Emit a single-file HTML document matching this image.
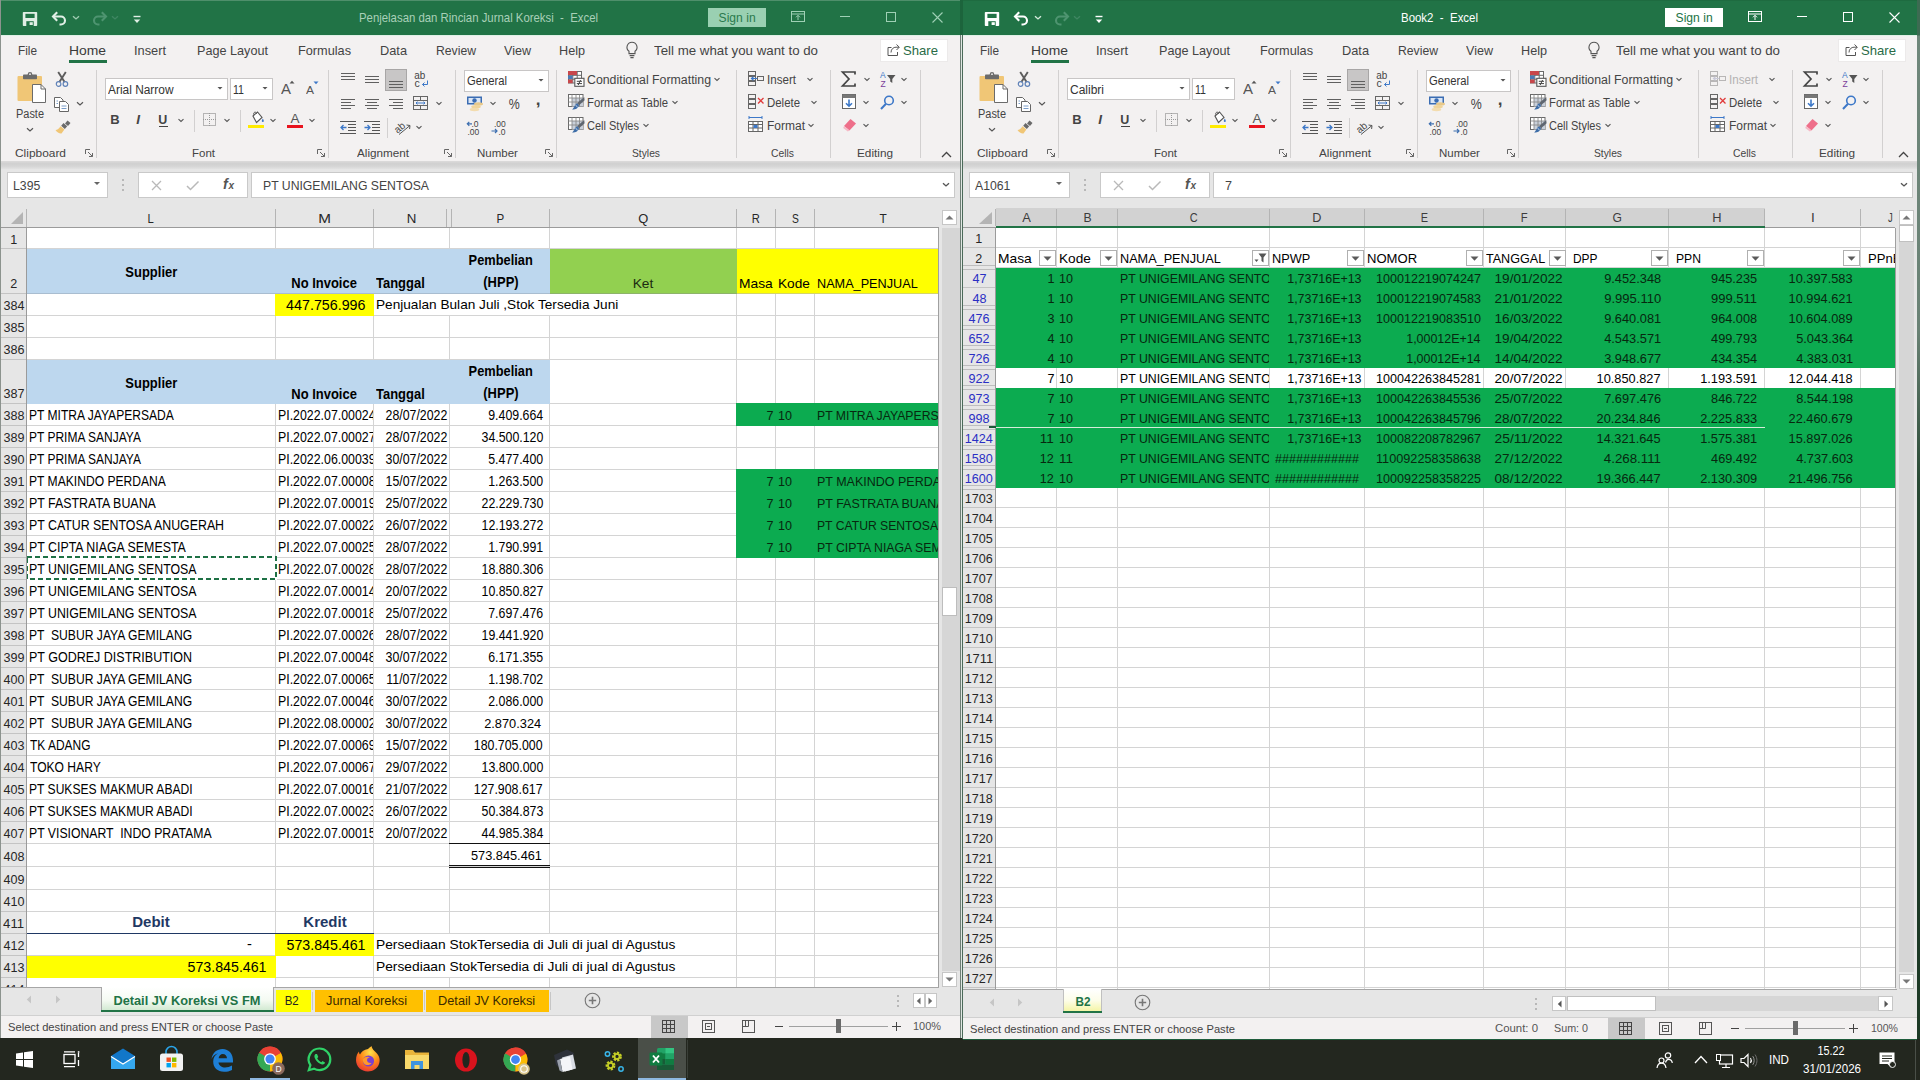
<!DOCTYPE html>
<html><head><meta charset="utf-8"><title>Excel</title>
<style>
html,body{margin:0;padding:0;}
body{width:1920px;height:1080px;overflow:hidden;position:relative;background:#23271f;font-family:"Liberation Sans",sans-serif;}
#r div,#r svg,#r span{position:absolute;}
#r{position:absolute;left:0;top:0;width:1920px;height:1080px;overflow:hidden;}
.t{white-space:pre;display:block;}
svg{overflow:visible;}
</style></head><body><div id="r">
<div style="left:0px;top:0px;width:1920px;height:1080px;background:#23271f;"></div>
<div style="left:0px;top:0px;width:961px;height:1038px;background:#e6e6e6;"></div>
<div style="left:0px;top:0px;width:961px;height:35px;background:#217346;"></div>
<div style="left:0px;top:0px;width:961px;height:1px;background:#4f8f6b;"></div>
<svg style="left:22px;top:11px;" width="16" height="16" viewBox="0 0 16 16"><rect x="0.8" y="1" width="14.4" height="14" rx="0.8" fill="#e1efe6"/><rect x="3.4" y="2.8" width="9.2" height="4.2" fill="#217346"/><rect x="4.3" y="10.2" width="7.4" height="4.8" fill="#217346"/><rect x="7.6" y="11.2" width="3.2" height="2.8" fill="#e1efe6"/></svg>
<svg style="left:51px;top:11px;" width="18" height="16" viewBox="0 0 18 16"><path d="M2 5.5 H10 A4 4 0 0 1 10 13.5 H8.5" fill="none" stroke="#e1efe6" stroke-width="2.1"/><path d="M6.2 1.3 L2 5.5 L6.2 9.7" fill="none" stroke="#e1efe6" stroke-width="2.1"/></svg>
<svg style="left:71px;top:14px;" width="10" height="8" viewBox="0 0 10 8"><path d="M2.0 2.2 L5 4.9 L8.0 2.2" fill="none" stroke="#9fcbb1" stroke-width="1.4"/></svg>
<svg style="left:90px;top:11px;" width="18" height="16" viewBox="0 0 18 16"><path d="M16 5.5 H8 A4 4 0 0 0 8 13.5 H9.5" fill="none" stroke="#4e9470" stroke-width="2.1"/><path d="M11.8 1.3 L16 5.5 L11.8 9.7" fill="none" stroke="#4e9470" stroke-width="2.1"/></svg>
<svg style="left:110px;top:14px;" width="10" height="8" viewBox="0 0 10 8"><path d="M2.0 2.2 L5 4.9 L8.0 2.2" fill="none" stroke="#3f8662" stroke-width="1.4"/></svg>
<svg style="left:132px;top:15px;" width="10" height="10" viewBox="0 0 10 10"><path d="M1.5 1.5 H8.5" stroke="#e1efe6" stroke-width="1.4"/><path d="M1.8 4.5 H8.2 L5 8 Z" fill="#e1efe6"/></svg>
<span class="t" style="left:359.00px;top:9px;height:18px;line-height:18px;font-size:13px;color:#a9d0b8;transform:scaleX(0.8750);transform-origin:0 50%;">Penjelasan dan Rincian Jurnal Koreksi &nbsp;- &nbsp;Excel</span>
<div style="left:708px;top:8px;width:58px;height:19px;background:#9ad0b2;"></div>
<span class="t" style="left:717.89px;top:9px;height:19px;line-height:19px;font-size:12.5px;color:#2a7a4e;transform:scaleX(0.9680);transform-origin:50% 50%;">Sign in</span>
<svg style="left:791px;top:11px;" width="14" height="12" viewBox="0 0 14 12"><rect x="0.5" y="0.5" width="13" height="10" fill="none" stroke="#9fd0b5" stroke-width="1"/><path d="M0.5 3 H13.5" stroke="#9fd0b5" stroke-width="1"/><path d="M7 9 V4.5 M5 6.3 L7 4.3 L9 6.3" fill="none" stroke="#9fd0b5" stroke-width="1"/></svg>
<div style="left:840px;top:16px;width:10px;height:1px;background:#9fd0b5;"></div>
<div style="left:886px;top:12px;width:10px;height:10px;border:1px solid #9fd0b5;box-sizing:border-box;"></div>
<svg style="left:932px;top:12px;" width="11" height="11" viewBox="0 0 11 11"><path d="M0.5 0.5 L10.5 10.5 M10.5 0.5 L0.5 10.5" stroke="#9fd0b5" stroke-width="1.1"/></svg>
<div style="left:0px;top:35px;width:961px;height:31px;background:#f3f1f1;"></div>
<div style="left:0px;top:35px;width:961px;height:1px;background:#dff0e6;"></div>
<span class="t" style="left:18.00px;top:42px;height:18px;line-height:18px;font-size:13px;color:#444444;transform:scaleX(0.9070);transform-origin:0 50%;">File</span>
<span class="t" style="left:69.00px;top:42px;height:18px;line-height:18px;font-size:13px;color:#3a3a3a;transform:scaleX(1.0669);transform-origin:0 50%;">Home</span>
<div style="left:69px;top:60px;width:38px;height:3px;background:#217346;"></div>
<span class="t" style="left:134.00px;top:42px;height:18px;line-height:18px;font-size:13px;color:#444444;transform:scaleX(0.9842);transform-origin:0 50%;">Insert</span>
<span class="t" style="left:197.00px;top:42px;height:18px;line-height:18px;font-size:13px;color:#444444;transform:scaleX(0.9725);transform-origin:0 50%;">Page Layout</span>
<span class="t" style="left:298.00px;top:42px;height:18px;line-height:18px;font-size:13px;color:#444444;transform:scaleX(0.9782);transform-origin:0 50%;">Formulas</span>
<span class="t" style="left:380.00px;top:42px;height:18px;line-height:18px;font-size:13px;color:#444444;transform:scaleX(0.9832);transform-origin:0 50%;">Data</span>
<span class="t" style="left:436.00px;top:42px;height:18px;line-height:18px;font-size:13px;color:#444444;transform:scaleX(0.9384);transform-origin:0 50%;">Review</span>
<span class="t" style="left:504.00px;top:42px;height:18px;line-height:18px;font-size:13px;color:#444444;transform:scaleX(0.9662);transform-origin:0 50%;">View</span>
<span class="t" style="left:559.00px;top:42px;height:18px;line-height:18px;font-size:13px;color:#444444;transform:scaleX(0.9724);transform-origin:0 50%;">Help</span>
<svg style="left:625px;top:41px;" width="14" height="19" viewBox="0 0 14 19"><path d="M7 1.2 A5 5 0 0 1 10 10.2 V12.6 H4 V10.2 A5 5 0 0 1 7 1.2 Z" fill="none" stroke="#555" stroke-width="1.1"/><path d="M4.6 14.6 H9.4 M5.4 16.6 H8.6" stroke="#555" stroke-width="1.1"/></svg>
<span class="t" style="left:654.00px;top:42px;height:18px;line-height:18px;font-size:13px;color:#444444;transform:scaleX(1.0223);transform-origin:0 50%;">Tell me what you want to do</span>
<div style="left:880px;top:39px;width:68px;height:23px;background:#ffffff;border:1px solid #eceaea;box-sizing:border-box;"></div>
<svg style="left:887px;top:43px;" width="14" height="14" viewBox="0 0 14 14"><path d="M4.5 4.5 H1 V12.5 H10.5 V9" fill="none" stroke="#555" stroke-width="1"/><path d="M4 9.5 C4 6 6.5 4.2 9 4.2 H12 M9.5 1.5 L12.3 4.2 L9.5 7" fill="none" stroke="#555" stroke-width="1"/></svg>
<span class="t" style="left:903.00px;top:42px;height:18px;line-height:18px;font-size:13px;color:#2a6b47;transform:scaleX(1.0089);transform-origin:0 50%;">Share</span>
<div style="left:0px;top:66px;width:961px;height:95px;background:#f3f1f1;"></div>
<div style="left:0px;top:161px;width:961px;height:9px;background:linear-gradient(#dcdbdb,#d0d0d0 30%,#d6d6d6 60%,#e6e6e6);"></div>
<svg style="left:16px;top:72px;" width="32" height="33" viewBox="0 0 32 33"><rect x="1.5" y="4" width="24.5" height="25" rx="1" fill="#f0c676"/><rect x="7" y="2.4" width="14" height="4.8" rx="0.8" fill="#6b6b6b"/><circle cx="14" cy="2.4" r="2.3" fill="#6b6b6b"/><circle cx="14" cy="2.2" r="0.9" fill="#f3f1f1"/><path d="M16.5 12.5 H25 L29.5 17 V30.5 H16.5 Z" fill="#ffffff" stroke="#6b6b6b" stroke-width="1"/><path d="M25 12.5 V17 H29.5" fill="none" stroke="#6b6b6b" stroke-width="1"/></svg>
<span class="t" style="left:16.00px;top:106px;height:16px;line-height:16px;font-size:12px;color:#444444;transform:scaleX(0.9125);transform-origin:0 50%;">Paste</span>
<svg style="left:25px;top:126px;" width="10" height="8" viewBox="0 0 10 8"><path d="M2.0 2.2 L5 4.9 L8.0 2.2" fill="none" stroke="#555" stroke-width="1.2"/></svg>
<svg style="left:54px;top:71px;" width="16" height="17" viewBox="0 0 16 17"><path d="M4.2 1 L10.6 11 M11.8 1 L5.4 11" stroke="#5d5d5d" stroke-width="1.9" fill="none"/><circle cx="4.6" cy="13" r="2.3" fill="none" stroke="#5f82b8" stroke-width="1.2"/><circle cx="11.4" cy="13" r="2.3" fill="none" stroke="#5f82b8" stroke-width="1.2"/></svg>
<svg style="left:54px;top:96px;" width="16" height="16" viewBox="0 0 16 16"><path d="M0.5 1.5 H6.5 L9 4 V11.5 H0.5 Z" fill="#fff" stroke="#666" stroke-width="1"/><path d="M5.5 5.5 H11.5 L14.5 8.5 V15.5 H5.5 Z" fill="#fff" stroke="#666" stroke-width="1"/><path d="M7.5 10 H12.5 M7.5 12.5 H12.5" stroke="#7a9cc8" stroke-width="1"/><path d="M2.5 5 H4 M2.5 7.5 H4" stroke="#7a9cc8" stroke-width="1"/></svg>
<svg style="left:75px;top:100px;" width="10" height="8" viewBox="0 0 10 8"><path d="M2.0 2.2 L5 4.9 L8.0 2.2" fill="none" stroke="#555" stroke-width="1.2"/></svg>
<svg style="left:54px;top:119px;" width="18" height="17" viewBox="0 0 18 17"><path d="M13.5 1.5 L16.5 4 L14 7 L11 4.5 Z" fill="#6a6a6a"/><path d="M9.5 4 L13.2 7.2 L10.8 10 L7.2 6.8 Z" fill="#6a6a6a"/><path d="M6.6 7.2 L10.4 10.6 L7.5 14.5 C5.5 14.8 3 13.5 1.5 11 C3.5 10.8 5 9.5 6.6 7.2 Z" fill="#f0c676"/></svg>
<span class="t" style="left:15.00px;top:146px;height:15px;line-height:15px;font-size:11.5px;color:#444444;transform:scaleX(1.0361);transform-origin:0 50%;">Clipboard</span>
<svg style="left:85px;top:149px;" width="9" height="9" viewBox="0 0 9 9"><path d="M0.5 5 V0.5 H5" fill="none" stroke="#666" stroke-width="1"/><path d="M3 3 L7.5 7.5 M7.5 4 V7.5 H4" fill="none" stroke="#666" stroke-width="1"/></svg>
<div style="left:96px;top:70px;width:1px;height:88px;background:#d2d0d0;"></div>
<div style="left:105px;top:78px;width:123px;height:22px;background:#fff;border:1px solid #c8c6c6;box-sizing:border-box;"></div>
<span class="t" style="left:108.00px;top:81px;height:18px;line-height:18px;font-size:12px;color:#333;transform:scaleX(0.9922);transform-origin:0 50%;">Arial Narrow</span>
<svg style="left:215px;top:86px;" width="10" height="6" viewBox="0 0 10 6"><path d="M2.5 1 L7.5 1 L5 3.5 Z" fill="#555"/></svg>
<div style="left:230px;top:78px;width:43px;height:22px;background:#fff;border:1px solid #c8c6c6;box-sizing:border-box;"></div>
<span class="t" style="left:233.00px;top:81px;height:18px;line-height:18px;font-size:12px;color:#333;transform:scaleX(0.8830);transform-origin:0 50%;">11</span>
<svg style="left:260px;top:86px;" width="10" height="6" viewBox="0 0 10 6"><path d="M2.5 1 L7.5 1 L5 3.5 Z" fill="#555"/></svg>
<span class="t" style="left:281.00px;top:80px;height:18px;line-height:18px;font-size:14px;color:#555;transform:scaleX(1.0708);transform-origin:0 50%;">A</span>
<svg style="left:289px;top:80px;" width="6" height="4" viewBox="0 0 6 4"><path d="M0.5 3.5 L3 0.8 L5.5 3.5 Z" fill="#555"/></svg>
<span class="t" style="left:306.00px;top:82px;height:16px;line-height:16px;font-size:11.5px;color:#555;transform:scaleX(1.0429);transform-origin:0 50%;">A</span>
<svg style="left:313px;top:81px;" width="6" height="4" viewBox="0 0 6 4"><path d="M0.5 0.5 L3 3.2 L5.5 0.5 Z" fill="#3d78c8"/></svg>
<span class="t" style="left:110.31px;top:111px;height:18px;line-height:18px;font-size:13px;color:#444;font-weight:700;">B</span>
<span class="t" style="left:136.37px;top:111px;height:18px;line-height:18px;font-size:13.5px;color:#444;font-weight:700;font-style:italic;font-family:"Liberation Serif",serif;">I</span>
<span class="t" style="left:158.31px;top:111px;height:18px;line-height:18px;font-size:13px;color:#444;font-weight:700;transform:scaleX(0.9586);transform-origin:50% 50%;">U</span>
<div style="left:159px;top:126px;width:9px;height:1px;background:#444;"></div>
<svg style="left:176px;top:117px;" width="10" height="8" viewBox="0 0 10 8"><path d="M2.5 2.2 L5 4.5 L7.5 2.2" fill="none" stroke="#555" stroke-width="1.1"/></svg>
<div style="left:194px;top:110px;width:1px;height:22px;background:#d2d0d0;"></div>
<svg style="left:203px;top:113px;" width="14" height="14" viewBox="0 0 14 14"><rect x="0.5" y="0.5" width="12" height="12" fill="none" stroke="#777" stroke-width="1" stroke-dasharray="1 1"/><path d="M6.5 0 V13 M0 6.5 H13" stroke="#999" stroke-width="1" stroke-dasharray="1 1"/></svg>
<svg style="left:222px;top:117px;" width="10" height="8" viewBox="0 0 10 8"><path d="M2.5 2.2 L5 4.5 L7.5 2.2" fill="none" stroke="#555" stroke-width="1.1"/></svg>
<div style="left:240px;top:110px;width:1px;height:22px;background:#d2d0d0;"></div>
<svg style="left:248px;top:111px;" width="17" height="13" viewBox="0 0 17 13"><path d="M5 5 L9.5 1 L14 6.5 L8.5 11.5 Z" fill="#fff" stroke="#555" stroke-width="1.1"/><path d="M5.5 3.5 C5.5 0.5 8.5 0.5 8.5 3" fill="none" stroke="#555" stroke-width="1"/><path d="M14.8 7.5 C16.2 9.5 16.2 11 14.8 11 C13.4 11 13.4 9.5 14.8 7.5 Z" fill="#3d78c8"/></svg>
<div style="left:248px;top:125px;width:16px;height:3px;background:#ffeb00;"></div>
<svg style="left:268px;top:117px;" width="10" height="8" viewBox="0 0 10 8"><path d="M2.5 2.2 L5 4.5 L7.5 2.2" fill="none" stroke="#555" stroke-width="1.1"/></svg>
<span class="t" style="left:290.50px;top:110px;height:18px;line-height:18px;font-size:13.5px;color:#555;">A</span>
<div style="left:287px;top:125px;width:16px;height:3px;background:#e8141f;"></div>
<svg style="left:307px;top:117px;" width="10" height="8" viewBox="0 0 10 8"><path d="M2.5 2.2 L5 4.5 L7.5 2.2" fill="none" stroke="#555" stroke-width="1.1"/></svg>
<span class="t" style="left:192.00px;top:146px;height:15px;line-height:15px;font-size:11.5px;color:#444444;">Font</span>
<svg style="left:317px;top:149px;" width="9" height="9" viewBox="0 0 9 9"><path d="M0.5 5 V0.5 H5" fill="none" stroke="#666" stroke-width="1"/><path d="M3 3 L7.5 7.5 M7.5 4 V7.5 H4" fill="none" stroke="#666" stroke-width="1"/></svg>
<div style="left:328px;top:70px;width:1px;height:88px;background:#d2d0d0;"></div>
<svg style="left:341px;top:73px;" width="14" height="9" viewBox="0 0 14 9"><rect x="0" y="0" width="14" height="1" fill="#606060"/><rect x="0" y="3" width="14" height="1" fill="#606060"/><rect x="0" y="6" width="14" height="1" fill="#606060"/></svg>
<svg style="left:365px;top:76px;" width="14" height="9" viewBox="0 0 14 9"><rect x="0" y="0" width="14" height="1" fill="#606060"/><rect x="0" y="3" width="14" height="1" fill="#606060"/><rect x="0" y="6" width="14" height="1" fill="#606060"/></svg>
<div style="left:385px;top:69px;width:22px;height:22px;background:#c8c6c6;border:1px solid #a8a6a6;box-sizing:border-box;"></div>
<svg style="left:389px;top:81px;" width="14" height="9" viewBox="0 0 14 9"><rect x="0" y="0" width="14" height="1" fill="#606060"/><rect x="0" y="3" width="14" height="1" fill="#606060"/><rect x="0" y="6" width="14" height="1" fill="#606060"/></svg>
<span class="t" style="left:414.16px;top:69px;height:12px;line-height:12px;font-size:10.5px;color:#444;transform:scaleX(0.9418);transform-origin:50% 50%;">ab</span>
<span class="t" style="left:414.38px;top:77px;height:12px;line-height:12px;font-size:10.5px;color:#444;">c</span>
<svg style="left:421px;top:80px;" width="8" height="8" viewBox="0 0 8 8"><path d="M6.5 0.5 V4.5 H1.5 M3.5 2.5 L1.5 4.5 L3.5 6.5" fill="none" stroke="#3d78c8" stroke-width="1"/></svg>
<svg style="left:341px;top:99px;" width="14" height="12" viewBox="0 0 14 12"><rect x="0" y="0" width="14" height="1" fill="#606060"/><rect x="0" y="3" width="10" height="1" fill="#606060"/><rect x="0" y="6" width="14" height="1" fill="#606060"/><rect x="0" y="9" width="10" height="1" fill="#606060"/></svg>
<svg style="left:365px;top:99px;" width="14" height="12" viewBox="0 0 14 12"><rect x="0.0" y="0" width="14" height="1" fill="#606060"/><rect x="2.0" y="3" width="10" height="1" fill="#606060"/><rect x="0.0" y="6" width="14" height="1" fill="#606060"/><rect x="2.0" y="9" width="10" height="1" fill="#606060"/></svg>
<svg style="left:389px;top:99px;" width="14" height="12" viewBox="0 0 14 12"><rect x="0" y="0" width="14" height="1" fill="#606060"/><rect x="4" y="3" width="10" height="1" fill="#606060"/><rect x="0" y="6" width="14" height="1" fill="#606060"/><rect x="4" y="9" width="10" height="1" fill="#606060"/></svg>
<svg style="left:413px;top:96px;" width="16" height="15" viewBox="0 0 16 15"><rect x="0.5" y="0.5" width="14" height="13" fill="none" stroke="#666" stroke-width="1"/><path d="M0.5 4.5 H14.5 M0.5 9.5 H14.5 M7.5 0.5 V4.5 M7.5 9.5 V13.5" stroke="#666" stroke-width="1"/><path d="M3 7 H12 M4.5 5.7 L3 7 L4.5 8.3 M10.5 5.7 L12 7 L10.5 8.3" fill="none" stroke="#3d78c8" stroke-width="1"/></svg>
<svg style="left:434px;top:100px;" width="10" height="8" viewBox="0 0 10 8"><path d="M2.5 2.2 L5 4.5 L7.5 2.2" fill="none" stroke="#555" stroke-width="1.1"/></svg>
<svg style="left:340px;top:121px;" width="16" height="13" viewBox="0 0 16 13"><path d="M0 0.5 H16 M8 3.5 H16 M8 6.5 H16 M8 9.5 H16 M0 12.5 H16" stroke="#555" stroke-width="1"/><path d="M6.5 6.5 H1 M3.5 4 L1 6.5 L3.5 9" fill="none" stroke="#3d78c8" stroke-width="1.3"/></svg>
<svg style="left:364px;top:121px;" width="16" height="13" viewBox="0 0 16 13"><path d="M0 0.5 H16 M8 3.5 H16 M8 6.5 H16 M8 9.5 H16 M0 12.5 H16" stroke="#555" stroke-width="1"/><path d="M0.5 6.5 H6 M3.5 4 L6 6.5 L3.5 9" fill="none" stroke="#3d78c8" stroke-width="1.3"/></svg>
<div style="left:387px;top:118px;width:1px;height:20px;background:#d2d0d0;"></div>
<svg style="left:394px;top:119px;" width="18" height="17" viewBox="0 0 18 17"><text x="1" y="12" font-size="10" font-family="Liberation Sans" fill="#444" transform="rotate(-40 6 10)">ab</text><path d="M5 15.5 L16 6.5 M12.5 6 L16 6.5 L15.6 10" fill="none" stroke="#555" stroke-width="1"/></svg>
<svg style="left:414px;top:124px;" width="10" height="8" viewBox="0 0 10 8"><path d="M2.5 2.2 L5 4.5 L7.5 2.2" fill="none" stroke="#555" stroke-width="1.1"/></svg>
<span class="t" style="left:357.00px;top:146px;height:15px;line-height:15px;font-size:11.5px;color:#444444;transform:scaleX(1.0168);transform-origin:0 50%;">Alignment</span>
<svg style="left:444px;top:149px;" width="9" height="9" viewBox="0 0 9 9"><path d="M0.5 5 V0.5 H5" fill="none" stroke="#666" stroke-width="1"/><path d="M3 3 L7.5 7.5 M7.5 4 V7.5 H4" fill="none" stroke="#666" stroke-width="1"/></svg>
<div style="left:455px;top:70px;width:1px;height:88px;background:#d2d0d0;"></div>
<div style="left:464px;top:70px;width:85px;height:22px;background:#fff;border:1px solid #c8c6c6;box-sizing:border-box;"></div>
<span class="t" style="left:467.00px;top:72px;height:18px;line-height:18px;font-size:12px;color:#333;transform:scaleX(0.9369);transform-origin:0 50%;">General</span>
<svg style="left:536px;top:78px;" width="10" height="6" viewBox="0 0 10 6"><path d="M2.5 1 L7.5 1 L5 3.5 Z" fill="#555"/></svg>
<svg style="left:467px;top:96px;" width="18" height="16" viewBox="0 0 18 16"><rect x="0" y="0.5" width="15" height="8" fill="#3b6db3"/><rect x="1.5" y="2" width="12" height="5" fill="#dbe6f5"/><circle cx="7.5" cy="4.5" r="2.2" fill="#3b6db3"/><ellipse cx="11.5" cy="8" rx="4.5" ry="1.7" fill="#e8c98a"/><ellipse cx="9" cy="10.8" rx="4.8" ry="1.7" fill="#f0d49a"/><ellipse cx="7.5" cy="13.5" rx="4.8" ry="1.7" fill="#f3dcae"/></svg>
<svg style="left:488px;top:100px;" width="10" height="8" viewBox="0 0 10 8"><path d="M2.5 2.2 L5 4.5 L7.5 2.2" fill="none" stroke="#555" stroke-width="1.1"/></svg>
<span class="t" style="left:507.78px;top:95px;height:18px;line-height:18px;font-size:14px;color:#444;transform:scaleX(0.8837);transform-origin:50% 50%;">%</span>
<span class="t" style="left:535.64px;top:91px;height:18px;line-height:18px;font-size:17px;color:#444;font-weight:700;">,</span>
<svg style="left:466px;top:120px;" width="16" height="15" viewBox="0 0 16 15"><text x="5.5" y="7" font-size="8.5" font-family="Liberation Sans" fill="#444">.0</text><text x="1.5" y="14.5" font-size="8.5" font-family="Liberation Sans" fill="#444">.00</text><path d="M6 3.8 H1.5 M3.3 1.8 L1.3 3.8 L3.3 5.8" fill="none" stroke="#3d6fb0" stroke-width="1.2"/></svg>
<svg style="left:491px;top:120px;" width="16" height="15" viewBox="0 0 16 15"><text x="3" y="7" font-size="8.5" font-family="Liberation Sans" fill="#444">.00</text><text x="7.5" y="14.5" font-size="8.5" font-family="Liberation Sans" fill="#444">.0</text><path d="M0.5 11 H6 M4 9 L6 11 L4 13" fill="none" stroke="#3d6fb0" stroke-width="1.2"/></svg>
<span class="t" style="left:477.00px;top:146px;height:15px;line-height:15px;font-size:11.5px;color:#444444;">Number</span>
<svg style="left:545px;top:149px;" width="9" height="9" viewBox="0 0 9 9"><path d="M0.5 5 V0.5 H5" fill="none" stroke="#666" stroke-width="1"/><path d="M3 3 L7.5 7.5 M7.5 4 V7.5 H4" fill="none" stroke="#666" stroke-width="1"/></svg>
<div style="left:556px;top:70px;width:1px;height:88px;background:#d2d0d0;"></div>
<svg style="left:568px;top:71px;" width="17" height="16" viewBox="0 0 17 16"><rect x="0.5" y="0.5" width="13" height="11.5" fill="#fff" stroke="#6a6a6a" stroke-width="1"/><path d="M0.5 4.3 H13.5 M0.5 8.2 H13.5 M4.8 0.5 V12 M9.2 0.5 V12" stroke="#6a6a6a" stroke-width="1"/><rect x="0" y="0" width="9" height="4" fill="#c8474b"/><rect x="0" y="4.6" width="4.6" height="3.4" fill="#4a7ab5"/><rect x="0" y="8.6" width="4.6" height="3.6" fill="#c8474b"/><rect x="6.8" y="7.3" width="9.2" height="8" fill="#fff" stroke="#555" stroke-width="1.1"/><path d="M8.8 10.3 H14 M8.8 12.6 H14 M12.6 9 L10.2 14" stroke="#444" stroke-width="1"/></svg>
<span class="t" style="left:587.00px;top:72px;height:17px;line-height:17px;font-size:12px;color:#444444;transform:scaleX(1.0271);transform-origin:0 50%;">Conditional Formatting</span>
<svg style="left:712px;top:76px;" width="10" height="8" viewBox="0 0 10 8"><path d="M2.5 2.2 L5 4.5 L7.5 2.2" fill="none" stroke="#555" stroke-width="1.1"/></svg>
<svg style="left:568px;top:94px;" width="17" height="17" viewBox="0 0 17 17"><rect x="0.5" y="0.5" width="14.5" height="12" fill="#fff" stroke="#6a6a6a" stroke-width="1"/><rect x="4" y="4" width="11" height="8.5" fill="#c9d0da"/><path d="M0.5 4 H15 M0.5 8 H15 M4 0.5 V12.5 M8 0.5 V12.5 M11.5 0.5 V12.5" stroke="#8a8a8a" stroke-width="0.9"/><path d="M16.2 3 L16.6 6.2 L11 11.2 L9 9.3 Z" fill="#5f6670"/><path d="M9 9.3 L11 11.2 C10.5 14 7.5 15.8 4 15.6 C6 14.5 6.2 11 9 9.3 Z" fill="#3f6ea8"/><path d="M7.5 11.2 L9.6 13" stroke="#dbe6f5" stroke-width="0.9"/></svg>
<svg style="left:568px;top:117px;" width="17" height="17" viewBox="0 0 17 17"><rect x="0.5" y="0.5" width="14.5" height="12" fill="#fff" stroke="#6a6a6a" stroke-width="1"/><rect x="4" y="4" width="11" height="8.5" fill="#c9d0da"/><path d="M0.5 4 H15 M0.5 8 H15 M4 0.5 V12.5 M8 0.5 V12.5 M11.5 0.5 V12.5" stroke="#8a8a8a" stroke-width="0.9"/><path d="M16.2 3 L16.6 6.2 L11 11.2 L9 9.3 Z" fill="#5f6670"/><path d="M9 9.3 L11 11.2 C10.5 14 7.5 15.8 4 15.6 C6 14.5 6.2 11 9 9.3 Z" fill="#3f6ea8"/><path d="M7.5 11.2 L9.6 13" stroke="#dbe6f5" stroke-width="0.9"/></svg>
<span class="t" style="left:587.00px;top:95px;height:17px;line-height:17px;font-size:12px;color:#444444;transform:scaleX(0.9438);transform-origin:0 50%;">Format as Table</span>
<svg style="left:670px;top:99px;" width="10" height="8" viewBox="0 0 10 8"><path d="M2.5 2.2 L5 4.5 L7.5 2.2" fill="none" stroke="#555" stroke-width="1.1"/></svg>
<span class="t" style="left:587.00px;top:118px;height:17px;line-height:17px;font-size:12px;color:#444444;transform:scaleX(0.9174);transform-origin:0 50%;">Cell Styles</span>
<svg style="left:641px;top:122px;" width="10" height="8" viewBox="0 0 10 8"><path d="M2.5 2.2 L5 4.5 L7.5 2.2" fill="none" stroke="#555" stroke-width="1.1"/></svg>
<span class="t" style="left:632.00px;top:146px;height:15px;line-height:15px;font-size:11.5px;color:#444444;transform:scaleX(0.8941);transform-origin:0 50%;">Styles</span>
<div style="left:736px;top:70px;width:1px;height:88px;background:#d2d0d0;"></div>
<svg style="left:748px;top:71px;" width="17" height="16" viewBox="0 0 17 16"><rect x="0.5" y="0.5" width="7" height="4" fill="none" stroke="#666"/><rect x="0.5" y="10.5" width="7" height="4" fill="none" stroke="#666"/><rect x="0.5" y="5.5" width="7" height="4" fill="none" stroke="#666"/><rect x="9.5" y="5.5" width="6" height="4" fill="none" stroke="#666"/><path d="M9 7.5 H3.5 M5.5 5.8 L3.5 7.5 L5.5 9.2" fill="none" stroke="#3d78c8" stroke-width="1.2"/></svg>
<span class="t" style="left:767.00px;top:72px;height:17px;line-height:17px;font-size:12px;color:#444444;transform:scaleX(0.9663);transform-origin:0 50%;">Insert</span>
<svg style="left:805px;top:76px;" width="10" height="8" viewBox="0 0 10 8"><path d="M2.5 2.2 L5 4.5 L7.5 2.2" fill="none" stroke="#555" stroke-width="1.1"/></svg>
<svg style="left:748px;top:94px;" width="17" height="16" viewBox="0 0 17 16"><rect x="0.5" y="0.5" width="7" height="4" fill="none" stroke="#666"/><rect x="0.5" y="10.5" width="7" height="4" fill="none" stroke="#666"/><rect x="0.5" y="5.5" width="7" height="4" fill="none" stroke="#666"/><path d="M10 4 L15.5 9.5 M15.5 4 L10 9.5" stroke="#e03a3a" stroke-width="1.3"/></svg>
<span class="t" style="left:767.00px;top:95px;height:17px;line-height:17px;font-size:12px;color:#444444;transform:scaleX(0.9513);transform-origin:0 50%;">Delete</span>
<svg style="left:809px;top:99px;" width="10" height="8" viewBox="0 0 10 8"><path d="M2.5 2.2 L5 4.5 L7.5 2.2" fill="none" stroke="#555" stroke-width="1.1"/></svg>
<svg style="left:748px;top:116px;" width="17" height="17" viewBox="0 0 17 17"><path d="M1 1.5 H14 M1 0 V3 M14 0 V3" stroke="#3d78c8" stroke-width="1"/><rect x="0.5" y="5.5" width="14" height="10" fill="#fff" stroke="#666"/><path d="M0.5 8.5 H14.5 M0.5 12 H14.5 M5 5.5 V15.5 M10 5.5 V15.5" stroke="#666"/><rect x="5.5" y="9" width="4" height="3" fill="#3d78c8"/></svg>
<span class="t" style="left:767.00px;top:118px;height:17px;line-height:17px;font-size:12px;color:#444444;">Format</span>
<svg style="left:806px;top:122px;" width="10" height="8" viewBox="0 0 10 8"><path d="M2.5 2.2 L5 4.5 L7.5 2.2" fill="none" stroke="#555" stroke-width="1.1"/></svg>
<span class="t" style="left:771.00px;top:146px;height:15px;line-height:15px;font-size:11.5px;color:#444444;transform:scaleX(0.8998);transform-origin:0 50%;">Cells</span>
<div style="left:830px;top:70px;width:1px;height:88px;background:#d2d0d0;"></div>
<svg style="left:841px;top:71px;" width="16" height="16" viewBox="0 0 16 16"><path d="M14 3.5 V1 H1.5 L8 8 L1.5 15 H14 V12.5" fill="none" stroke="#444" stroke-width="1.7"/></svg>
<svg style="left:862px;top:76px;" width="10" height="8" viewBox="0 0 10 8"><path d="M2.5 2.2 L5 4.5 L7.5 2.2" fill="none" stroke="#555" stroke-width="1.1"/></svg>
<svg style="left:880px;top:70px;" width="18" height="18" viewBox="0 0 18 18"><text x="0" y="7.5" font-size="8.5" font-family="Liberation Sans" fill="#3d78c8">A</text><text x="0.5" y="17" font-size="8.5" font-family="Liberation Sans" fill="#7a3c9a">Z</text><path d="M7 5 H15.5 L12.3 9 V13 L10.2 11.5 V9 Z" fill="#555"/></svg>
<svg style="left:899px;top:76px;" width="10" height="8" viewBox="0 0 10 8"><path d="M2.5 2.2 L5 4.5 L7.5 2.2" fill="none" stroke="#555" stroke-width="1.1"/></svg>
<svg style="left:842px;top:94px;" width="16" height="16" viewBox="0 0 16 16"><rect x="0.5" y="0.5" width="13" height="14" fill="#fff" stroke="#666"/><rect x="0.5" y="0.5" width="13" height="3.5" fill="#777"/><path d="M7 5.5 V12 M4 9.2 L7 12.2 L10 9.2" fill="none" stroke="#3d78c8" stroke-width="1.6"/></svg>
<svg style="left:861px;top:99px;" width="10" height="8" viewBox="0 0 10 8"><path d="M2.5 2.2 L5 4.5 L7.5 2.2" fill="none" stroke="#555" stroke-width="1.1"/></svg>
<svg style="left:880px;top:95px;" width="15" height="15" viewBox="0 0 15 15"><circle cx="9" cy="5.5" r="4.3" fill="none" stroke="#3d78c8" stroke-width="1.6"/><path d="M6 8.8 L1 14" stroke="#3d78c8" stroke-width="2"/></svg>
<svg style="left:899px;top:99px;" width="10" height="8" viewBox="0 0 10 8"><path d="M2.5 2.2 L5 4.5 L7.5 2.2" fill="none" stroke="#555" stroke-width="1.1"/></svg>
<svg style="left:842px;top:118px;" width="15" height="14" viewBox="0 0 15 14"><path d="M8.5 1 L14 5.5 L7.5 12.5 L2 8 Z" fill="#ee6f8a"/><path d="M2 8 L7.5 12.5 L5.8 13.5 L1.2 10 Z" fill="#f6b9c6"/></svg>
<svg style="left:861px;top:122px;" width="10" height="8" viewBox="0 0 10 8"><path d="M2.5 2.2 L5 4.5 L7.5 2.2" fill="none" stroke="#555" stroke-width="1.1"/></svg>
<span class="t" style="left:857.00px;top:146px;height:15px;line-height:15px;font-size:11.5px;color:#444444;transform:scaleX(1.0238);transform-origin:0 50%;">Editing</span>
<div style="left:920px;top:70px;width:1px;height:88px;background:#d2d0d0;"></div>
<svg style="left:941px;top:151px;" width="11" height="7" viewBox="0 0 11 7"><path d="M1 6 L5.5 1.5 L10 6" fill="none" stroke="#444" stroke-width="1.3"/></svg>
<div style="left:0px;top:169px;width:961px;height:39px;background:#e6e6e6;"></div>
<div style="left:7px;top:172px;width:101px;height:26px;background:#fff;border:1px solid #c9c9c9;box-sizing:border-box;"></div>
<span class="t" style="left:13.00px;top:177px;height:18px;line-height:18px;font-size:12.5px;color:#444;transform:scaleX(0.9800);transform-origin:0 50%;">L395</span>
<svg style="left:92px;top:181px;" width="10" height="6" viewBox="0 0 10 6"><path d="M2.0 1 L8.0 1 L5 4.0 Z" fill="#666"/></svg>
<div style="left:122px;top:179px;width:2px;height:2px;background:#b8b8b8;"></div>
<div style="left:122px;top:184px;width:2px;height:2px;background:#b8b8b8;"></div>
<div style="left:122px;top:189px;width:2px;height:2px;background:#b8b8b8;"></div>
<div style="left:138px;top:172px;width:110px;height:26px;background:#fff;border:1px solid #c9c9c9;box-sizing:border-box;"></div>
<svg style="left:151px;top:180px;" width="11" height="11" viewBox="0 0 11 11"><path d="M1 1 L10 10 M10 1 L1 10" stroke="#b9b9b9" stroke-width="1.3"/></svg>
<svg style="left:186px;top:180px;" width="14" height="11" viewBox="0 0 14 11"><path d="M1 6 L4.5 9.5 L12.5 1.5" fill="none" stroke="#b9b9b9" stroke-width="1.5"/></svg>
<span class="t" style="left:223.00px;top:175px;height:18px;line-height:18px;font-size:14.5px;color:#555;font-weight:700;font-style:italic;font-family:"Liberation Serif",serif;">f</span>
<span class="t" style="left:228.50px;top:179px;height:14px;line-height:14px;font-size:10px;color:#555;font-weight:700;font-style:italic;font-family:"Liberation Serif",serif;">x</span>
<div style="left:251px;top:172px;width:704px;height:26px;background:#fff;border:1px solid #c9c9c9;box-sizing:border-box;"></div>
<span class="t" style="left:263.00px;top:177px;height:18px;line-height:18px;font-size:12.5px;color:#444;transform:scaleX(0.9781);transform-origin:0 50%;">PT UNIGEMILANG SENTOSA</span>
<svg style="left:941px;top:181px;" width="10" height="8" viewBox="0 0 10 8"><path d="M2.0 2.2 L5 4.9 L8.0 2.2" fill="none" stroke="#555" stroke-width="1.4"/></svg>
<div style="left:1px;top:205px;width:959px;height:783px;background:#e6e6e6;"></div>
<div style="left:27px;top:228px;width:912px;height:759px;background:#fff;"></div>
<div style="left:27px;top:228px;width:912px;height:759px;overflow:hidden;"><div style="left:-27px;top:-228px;width:1920px;height:1080px;"><div style="left:275px;top:228px;width:1px;height:759px;background:#d4d4d4"></div><div style="left:373px;top:228px;width:1px;height:759px;background:#d4d4d4"></div><div style="left:449px;top:228px;width:1px;height:759px;background:#d4d4d4"></div><div style="left:549px;top:228px;width:1px;height:759px;background:#d4d4d4"></div><div style="left:736px;top:228px;width:1px;height:759px;background:#d4d4d4"></div><div style="left:775px;top:228px;width:1px;height:759px;background:#d4d4d4"></div><div style="left:814px;top:228px;width:1px;height:759px;background:#d4d4d4"></div><div style="left:938px;top:228px;width:1px;height:759px;background:#d4d4d4"></div><div style="left:27px;top:248px;width:911px;height:1px;background:#d4d4d4"></div><div style="left:27px;top:293px;width:911px;height:1px;background:#d4d4d4"></div><div style="left:27px;top:315px;width:911px;height:1px;background:#d4d4d4"></div><div style="left:27px;top:337px;width:911px;height:1px;background:#d4d4d4"></div><div style="left:27px;top:359px;width:911px;height:1px;background:#d4d4d4"></div><div style="left:27px;top:403px;width:911px;height:1px;background:#d4d4d4"></div><div style="left:27px;top:425px;width:911px;height:1px;background:#d4d4d4"></div><div style="left:27px;top:447px;width:911px;height:1px;background:#d4d4d4"></div><div style="left:27px;top:469px;width:911px;height:1px;background:#d4d4d4"></div><div style="left:27px;top:491px;width:911px;height:1px;background:#d4d4d4"></div><div style="left:27px;top:513px;width:911px;height:1px;background:#d4d4d4"></div><div style="left:27px;top:535px;width:911px;height:1px;background:#d4d4d4"></div><div style="left:27px;top:557px;width:911px;height:1px;background:#d4d4d4"></div><div style="left:27px;top:579px;width:911px;height:1px;background:#d4d4d4"></div><div style="left:27px;top:601px;width:911px;height:1px;background:#d4d4d4"></div><div style="left:27px;top:623px;width:911px;height:1px;background:#d4d4d4"></div><div style="left:27px;top:645px;width:911px;height:1px;background:#d4d4d4"></div><div style="left:27px;top:667px;width:911px;height:1px;background:#d4d4d4"></div><div style="left:27px;top:689px;width:911px;height:1px;background:#d4d4d4"></div><div style="left:27px;top:711px;width:911px;height:1px;background:#d4d4d4"></div><div style="left:27px;top:733px;width:911px;height:1px;background:#d4d4d4"></div><div style="left:27px;top:755px;width:911px;height:1px;background:#d4d4d4"></div><div style="left:27px;top:777px;width:911px;height:1px;background:#d4d4d4"></div><div style="left:27px;top:799px;width:911px;height:1px;background:#d4d4d4"></div><div style="left:27px;top:821px;width:911px;height:1px;background:#d4d4d4"></div><div style="left:27px;top:843px;width:911px;height:1px;background:#d4d4d4"></div><div style="left:27px;top:866px;width:911px;height:1px;background:#d4d4d4"></div><div style="left:27px;top:889px;width:911px;height:1px;background:#d4d4d4"></div><div style="left:27px;top:911px;width:911px;height:1px;background:#d4d4d4"></div><div style="left:27px;top:933px;width:911px;height:1px;background:#d4d4d4"></div><div style="left:27px;top:955px;width:911px;height:1px;background:#d4d4d4"></div><div style="left:27px;top:977px;width:911px;height:1px;background:#d4d4d4"></div><div style="left:27px;top:999px;width:911px;height:1px;background:#d4d4d4"></div><div style="left:27px;top:249px;width:523px;height:44px;background:#bdd7ee"></div><div style="left:27px;top:293px;width:523px;height:1px;background:#a9bdd0"></div><div style="left:550px;top:249px;width:187px;height:44px;background:#92d050"></div><div style="left:550px;top:293px;width:187px;height:1px;background:#8db36a"></div><div style="left:737px;top:249px;width:202px;height:44px;background:#ffff00"></div><div style="left:737px;top:293px;width:202px;height:1px;background:#d4d46a"></div><div style="left:27px;top:360px;width:523px;height:44px;background:#bdd7ee"></div><div style="left:275px;top:294px;width:99px;height:22px;background:#ffff00"></div><div style="left:275px;top:934px;width:99px;height:22px;background:#ffff00"></div><div style="left:27px;top:956px;width:249px;height:22px;background:#ffff00"></div><div style="left:736px;top:403px;width:203px;height:23px;background:#0cab50"></div><div style="left:736px;top:469px;width:203px;height:89px;background:#0cab50"></div><div style="left:449px;top:294px;width:1px;height:21px;background:#fff"></div><div style="left:549px;top:294px;width:1px;height:21px;background:#fff"></div><div style="left:449px;top:934px;width:1px;height:21px;background:#fff"></div><div style="left:549px;top:934px;width:1px;height:21px;background:#fff"></div><div style="left:449px;top:956px;width:1px;height:21px;background:#fff"></div><div style="left:549px;top:956px;width:1px;height:21px;background:#fff"></div><span class="t" style="left:121.66px;top:261px;height:22px;line-height:22px;font-size:14.67px;color:#000;font-weight:700;transform:scaleX(0.8850);transform-origin:50% 50%;">Supplier</span><span class="t" style="left:286.91px;top:272px;height:22px;line-height:22px;font-size:14.67px;color:#000;font-weight:700;transform:scaleX(0.8850);transform-origin:50% 50%;">No Invoice</span><span class="t" style="left:376.00px;top:272px;height:22px;line-height:22px;font-size:14.67px;color:#000;font-weight:700;transform:scaleX(0.8850);transform-origin:0 50%;">Tanggal</span><span class="t" style="left:464.31px;top:249px;height:22px;line-height:22px;font-size:14.67px;color:#000;font-weight:700;transform:scaleX(0.8750);transform-origin:50% 50%;">Pembelian</span><span class="t" style="left:481.03px;top:271px;height:22px;line-height:22px;font-size:14.67px;color:#000;font-weight:700;transform:scaleX(0.8850);transform-origin:50% 50%;">(HPP)</span><span class="t" style="left:121.66px;top:372px;height:22px;line-height:22px;font-size:14.67px;color:#000;font-weight:700;transform:scaleX(0.8850);transform-origin:50% 50%;">Supplier</span><span class="t" style="left:286.91px;top:383px;height:22px;line-height:22px;font-size:14.67px;color:#000;font-weight:700;transform:scaleX(0.8850);transform-origin:50% 50%;">No Invoice</span><span class="t" style="left:376.00px;top:383px;height:22px;line-height:22px;font-size:14.67px;color:#000;font-weight:700;transform:scaleX(0.8850);transform-origin:0 50%;">Tanggal</span><span class="t" style="left:464.31px;top:360px;height:22px;line-height:22px;font-size:14.67px;color:#000;font-weight:700;transform:scaleX(0.8750);transform-origin:50% 50%;">Pembelian</span><span class="t" style="left:481.03px;top:382px;height:22px;line-height:22px;font-size:14.67px;color:#000;font-weight:700;transform:scaleX(0.8850);transform-origin:50% 50%;">(HPP)</span><span class="t" style="left:633.02px;top:274px;height:20px;line-height:20px;font-size:13.3px;color:#1c2b10;transform:scaleX(1.0370);transform-origin:50% 50%;">Ket</span><span class="t" style="left:739.00px;top:274px;height:20px;line-height:20px;font-size:13.3px;color:#000;transform:scaleX(1.0375);transform-origin:0 50%;">Masa</span><span class="t" style="left:778.00px;top:274px;height:20px;line-height:20px;font-size:13.3px;color:#000;transform:scaleX(1.0264);transform-origin:0 50%;">Kode</span><span class="t" style="left:817.00px;top:274px;height:20px;line-height:20px;font-size:13.3px;color:#000;transform:scaleX(0.9529);transform-origin:0 50%;">NAMA_PENJUAL</span><span class="t" style="left:284.42px;top:294px;height:22px;line-height:22px;font-size:14.67px;color:#000;transform:scaleX(0.9745);transform-origin:100% 50%;">447.756.996</span><span class="t" style="left:376.00px;top:295px;height:20px;line-height:20px;font-size:13.3px;color:#000;transform:scaleX(1.0253);transform-origin:0 50%;">Penjualan Bulan Juli ,Stok Tersedia Juni</span><span class="t" style="left:29.00px;top:404px;height:22px;line-height:22px;font-size:14.67px;color:#000;transform:scaleX(0.8234);transform-origin:0 50%;">PT MITRA JAYAPERSADA</span><span class="t" style="left:373.58px;top:404px;height:22px;line-height:22px;font-size:14.67px;color:#000;transform:scaleX(0.8430);transform-origin:100% 50%;">28/07/2022</span><span class="t" style="left:477.74px;top:404px;height:22px;line-height:22px;font-size:14.67px;color:#000;transform:scaleX(0.8430);transform-origin:100% 50%;">9.409.664</span><span class="t" style="left:29.00px;top:426px;height:22px;line-height:22px;font-size:14.67px;color:#000;transform:scaleX(0.8177);transform-origin:0 50%;">PT PRIMA SANJAYA</span><span class="t" style="left:373.58px;top:426px;height:22px;line-height:22px;font-size:14.67px;color:#000;transform:scaleX(0.8430);transform-origin:100% 50%;">28/07/2022</span><span class="t" style="left:469.58px;top:426px;height:22px;line-height:22px;font-size:14.67px;color:#000;transform:scaleX(0.8430);transform-origin:100% 50%;">34.500.120</span><span class="t" style="left:29.00px;top:448px;height:22px;line-height:22px;font-size:14.67px;color:#000;transform:scaleX(0.8177);transform-origin:0 50%;">PT PRIMA SANJAYA</span><span class="t" style="left:373.58px;top:448px;height:22px;line-height:22px;font-size:14.67px;color:#000;transform:scaleX(0.8430);transform-origin:100% 50%;">30/07/2022</span><span class="t" style="left:477.74px;top:448px;height:22px;line-height:22px;font-size:14.67px;color:#000;transform:scaleX(0.8430);transform-origin:100% 50%;">5.477.400</span><span class="t" style="left:29.00px;top:470px;height:22px;line-height:22px;font-size:14.67px;color:#000;transform:scaleX(0.8252);transform-origin:0 50%;">PT MAKINDO PERDANA</span><span class="t" style="left:373.58px;top:470px;height:22px;line-height:22px;font-size:14.67px;color:#000;transform:scaleX(0.8430);transform-origin:100% 50%;">15/07/2022</span><span class="t" style="left:477.74px;top:470px;height:22px;line-height:22px;font-size:14.67px;color:#000;transform:scaleX(0.8430);transform-origin:100% 50%;">1.263.500</span><span class="t" style="left:29.00px;top:492px;height:22px;line-height:22px;font-size:14.67px;color:#000;transform:scaleX(0.8467);transform-origin:0 50%;">PT FASTRATA BUANA</span><span class="t" style="left:373.58px;top:492px;height:22px;line-height:22px;font-size:14.67px;color:#000;transform:scaleX(0.8430);transform-origin:100% 50%;">25/07/2022</span><span class="t" style="left:469.58px;top:492px;height:22px;line-height:22px;font-size:14.67px;color:#000;transform:scaleX(0.8430);transform-origin:100% 50%;">22.229.730</span><span class="t" style="left:29.00px;top:514px;height:22px;line-height:22px;font-size:14.67px;color:#000;transform:scaleX(0.8433);transform-origin:0 50%;">PT CATUR SENTOSA ANUGERAH</span><span class="t" style="left:373.58px;top:514px;height:22px;line-height:22px;font-size:14.67px;color:#000;transform:scaleX(0.8430);transform-origin:100% 50%;">26/07/2022</span><span class="t" style="left:469.58px;top:514px;height:22px;line-height:22px;font-size:14.67px;color:#000;transform:scaleX(0.8430);transform-origin:100% 50%;">12.193.272</span><span class="t" style="left:29.00px;top:536px;height:22px;line-height:22px;font-size:14.67px;color:#000;transform:scaleX(0.8447);transform-origin:0 50%;">PT CIPTA NIAGA SEMESTA</span><span class="t" style="left:373.58px;top:536px;height:22px;line-height:22px;font-size:14.67px;color:#000;transform:scaleX(0.8430);transform-origin:100% 50%;">28/07/2022</span><span class="t" style="left:477.74px;top:536px;height:22px;line-height:22px;font-size:14.67px;color:#000;transform:scaleX(0.8430);transform-origin:100% 50%;">1.790.991</span><span class="t" style="left:29.00px;top:558px;height:22px;line-height:22px;font-size:14.67px;color:#000;transform:scaleX(0.8422);transform-origin:0 50%;">PT UNIGEMILANG SENTOSA</span><span class="t" style="left:373.58px;top:558px;height:22px;line-height:22px;font-size:14.67px;color:#000;transform:scaleX(0.8430);transform-origin:100% 50%;">28/07/2022</span><span class="t" style="left:469.58px;top:558px;height:22px;line-height:22px;font-size:14.67px;color:#000;transform:scaleX(0.8430);transform-origin:100% 50%;">18.880.306</span><span class="t" style="left:29.00px;top:580px;height:22px;line-height:22px;font-size:14.67px;color:#000;transform:scaleX(0.8422);transform-origin:0 50%;">PT UNIGEMILANG SENTOSA</span><span class="t" style="left:373.58px;top:580px;height:22px;line-height:22px;font-size:14.67px;color:#000;transform:scaleX(0.8430);transform-origin:100% 50%;">20/07/2022</span><span class="t" style="left:469.58px;top:580px;height:22px;line-height:22px;font-size:14.67px;color:#000;transform:scaleX(0.8430);transform-origin:100% 50%;">10.850.827</span><span class="t" style="left:29.00px;top:602px;height:22px;line-height:22px;font-size:14.67px;color:#000;transform:scaleX(0.8422);transform-origin:0 50%;">PT UNIGEMILANG SENTOSA</span><span class="t" style="left:373.58px;top:602px;height:22px;line-height:22px;font-size:14.67px;color:#000;transform:scaleX(0.8430);transform-origin:100% 50%;">25/07/2022</span><span class="t" style="left:477.74px;top:602px;height:22px;line-height:22px;font-size:14.67px;color:#000;transform:scaleX(0.8430);transform-origin:100% 50%;">7.697.476</span><span class="t" style="left:29.00px;top:624px;height:22px;line-height:22px;font-size:14.67px;color:#000;transform:scaleX(0.8275);transform-origin:0 50%;">PT &nbsp;SUBUR JAYA GEMILANG</span><span class="t" style="left:373.58px;top:624px;height:22px;line-height:22px;font-size:14.67px;color:#000;transform:scaleX(0.8430);transform-origin:100% 50%;">28/07/2022</span><span class="t" style="left:469.58px;top:624px;height:22px;line-height:22px;font-size:14.67px;color:#000;transform:scaleX(0.8430);transform-origin:100% 50%;">19.441.920</span><span class="t" style="left:29.00px;top:646px;height:22px;line-height:22px;font-size:14.67px;color:#000;transform:scaleX(0.8535);transform-origin:0 50%;">PT GODREJ DISTRIBUTION</span><span class="t" style="left:373.58px;top:646px;height:22px;line-height:22px;font-size:14.67px;color:#000;transform:scaleX(0.8430);transform-origin:100% 50%;">30/07/2022</span><span class="t" style="left:477.74px;top:646px;height:22px;line-height:22px;font-size:14.67px;color:#000;transform:scaleX(0.8430);transform-origin:100% 50%;">6.171.355</span><span class="t" style="left:29.00px;top:668px;height:22px;line-height:22px;font-size:14.67px;color:#000;transform:scaleX(0.8275);transform-origin:0 50%;">PT &nbsp;SUBUR JAYA GEMILANG</span><span class="t" style="left:374.67px;top:668px;height:22px;line-height:22px;font-size:14.67px;color:#000;transform:scaleX(0.8430);transform-origin:100% 50%;">11/07/2022</span><span class="t" style="left:477.74px;top:668px;height:22px;line-height:22px;font-size:14.67px;color:#000;transform:scaleX(0.8430);transform-origin:100% 50%;">1.198.702</span><span class="t" style="left:29.00px;top:690px;height:22px;line-height:22px;font-size:14.67px;color:#000;transform:scaleX(0.8275);transform-origin:0 50%;">PT &nbsp;SUBUR JAYA GEMILANG</span><span class="t" style="left:373.58px;top:690px;height:22px;line-height:22px;font-size:14.67px;color:#000;transform:scaleX(0.8430);transform-origin:100% 50%;">30/07/2022</span><span class="t" style="left:477.74px;top:690px;height:22px;line-height:22px;font-size:14.67px;color:#000;transform:scaleX(0.8430);transform-origin:100% 50%;">2.086.000</span><span class="t" style="left:29.00px;top:712px;height:22px;line-height:22px;font-size:14.67px;color:#000;transform:scaleX(0.8275);transform-origin:0 50%;">PT &nbsp;SUBUR JAYA GEMILANG</span><span class="t" style="left:373.58px;top:712px;height:22px;line-height:22px;font-size:14.67px;color:#000;transform:scaleX(0.8430);transform-origin:100% 50%;">30/07/2022</span><span class="t" style="left:481.83px;top:714px;height:20px;line-height:20px;font-size:13.3px;color:#000;transform:scaleX(0.9633);transform-origin:100% 50%;">2.870.324</span><span class="t" style="left:30.00px;top:734px;height:22px;line-height:22px;font-size:14.67px;color:#000;transform:scaleX(0.8155);transform-origin:0 50%;">TK ADANG</span><span class="t" style="left:373.58px;top:734px;height:22px;line-height:22px;font-size:14.67px;color:#000;transform:scaleX(0.8430);transform-origin:100% 50%;">15/07/2022</span><span class="t" style="left:461.42px;top:734px;height:22px;line-height:22px;font-size:14.67px;color:#000;transform:scaleX(0.8430);transform-origin:100% 50%;">180.705.000</span><span class="t" style="left:30.00px;top:756px;height:22px;line-height:22px;font-size:14.67px;color:#000;transform:scaleX(0.8239);transform-origin:0 50%;">TOKO HARY</span><span class="t" style="left:373.58px;top:756px;height:22px;line-height:22px;font-size:14.67px;color:#000;transform:scaleX(0.8430);transform-origin:100% 50%;">29/07/2022</span><span class="t" style="left:469.58px;top:756px;height:22px;line-height:22px;font-size:14.67px;color:#000;transform:scaleX(0.8430);transform-origin:100% 50%;">13.800.000</span><span class="t" style="left:29.00px;top:778px;height:22px;line-height:22px;font-size:14.67px;color:#000;transform:scaleX(0.8243);transform-origin:0 50%;">PT SUKSES MAKMUR ABADI</span><span class="t" style="left:373.58px;top:778px;height:22px;line-height:22px;font-size:14.67px;color:#000;transform:scaleX(0.8430);transform-origin:100% 50%;">21/07/2022</span><span class="t" style="left:461.42px;top:778px;height:22px;line-height:22px;font-size:14.67px;color:#000;transform:scaleX(0.8430);transform-origin:100% 50%;">127.908.617</span><span class="t" style="left:29.00px;top:800px;height:22px;line-height:22px;font-size:14.67px;color:#000;transform:scaleX(0.8243);transform-origin:0 50%;">PT SUKSES MAKMUR ABADI</span><span class="t" style="left:373.58px;top:800px;height:22px;line-height:22px;font-size:14.67px;color:#000;transform:scaleX(0.8430);transform-origin:100% 50%;">26/07/2022</span><span class="t" style="left:469.58px;top:800px;height:22px;line-height:22px;font-size:14.67px;color:#000;transform:scaleX(0.8430);transform-origin:100% 50%;">50.384.873</span><span class="t" style="left:29.00px;top:822px;height:22px;line-height:22px;font-size:14.67px;color:#000;transform:scaleX(0.8355);transform-origin:0 50%;">PT VISIONART &nbsp;INDO PRATAMA</span><span class="t" style="left:373.58px;top:822px;height:22px;line-height:22px;font-size:14.67px;color:#000;transform:scaleX(0.8430);transform-origin:100% 50%;">20/07/2022</span><span class="t" style="left:469.58px;top:822px;height:22px;line-height:22px;font-size:14.67px;color:#000;transform:scaleX(0.8430);transform-origin:100% 50%;">44.985.384</span><span class="t" style="left:765.60px;top:406px;height:20px;line-height:20px;font-size:13.3px;color:#07280f;transform:scaleX(0.9463);transform-origin:100% 50%;">7</span><span class="t" style="left:778.00px;top:406px;height:20px;line-height:20px;font-size:13.3px;color:#07280f;transform:scaleX(0.9463);transform-origin:0 50%;">10</span><span class="t" style="left:817.00px;top:406px;height:20px;line-height:20px;font-size:13.3px;color:#07280f;transform:scaleX(0.9200);transform-origin:0 50%;">PT MITRA JAYAPERSADA</span><span class="t" style="left:765.60px;top:472px;height:20px;line-height:20px;font-size:13.3px;color:#07280f;transform:scaleX(0.9463);transform-origin:100% 50%;">7</span><span class="t" style="left:778.00px;top:472px;height:20px;line-height:20px;font-size:13.3px;color:#07280f;transform:scaleX(0.9463);transform-origin:0 50%;">10</span><span class="t" style="left:817.00px;top:472px;height:20px;line-height:20px;font-size:13.3px;color:#07280f;transform:scaleX(0.9397);transform-origin:0 50%;">PT MAKINDO PERDANA</span><span class="t" style="left:765.60px;top:494px;height:20px;line-height:20px;font-size:13.3px;color:#07280f;transform:scaleX(0.9463);transform-origin:100% 50%;">7</span><span class="t" style="left:778.00px;top:494px;height:20px;line-height:20px;font-size:13.3px;color:#07280f;transform:scaleX(0.9463);transform-origin:0 50%;">10</span><span class="t" style="left:817.00px;top:494px;height:20px;line-height:20px;font-size:13.3px;color:#07280f;transform:scaleX(0.9379);transform-origin:0 50%;">PT FASTRATA BUANA</span><span class="t" style="left:765.60px;top:516px;height:20px;line-height:20px;font-size:13.3px;color:#07280f;transform:scaleX(0.9463);transform-origin:100% 50%;">7</span><span class="t" style="left:778.00px;top:516px;height:20px;line-height:20px;font-size:13.3px;color:#07280f;transform:scaleX(0.9463);transform-origin:0 50%;">10</span><span class="t" style="left:817.00px;top:516px;height:20px;line-height:20px;font-size:13.3px;color:#07280f;transform:scaleX(0.9151);transform-origin:0 50%;">PT CATUR SENTOSA ANUGERAH</span><span class="t" style="left:765.60px;top:538px;height:20px;line-height:20px;font-size:13.3px;color:#07280f;transform:scaleX(0.9463);transform-origin:100% 50%;">7</span><span class="t" style="left:778.00px;top:538px;height:20px;line-height:20px;font-size:13.3px;color:#07280f;transform:scaleX(0.9463);transform-origin:0 50%;">10</span><span class="t" style="left:817.00px;top:538px;height:20px;line-height:20px;font-size:13.3px;color:#07280f;transform:scaleX(0.9257);transform-origin:0 50%;">PT CIPTA NIAGA SEMESTA</span><span class="t" style="left:468.04px;top:846px;height:20px;line-height:20px;font-size:13.3px;color:#000;transform:scaleX(0.9599);transform-origin:100% 50%;">573.845.461</span><div style="left:449px;top:843px;width:101px;height:1px;background:#111"></div><div style="left:449px;top:865px;width:101px;height:1px;background:#111"></div><div style="left:449px;top:867px;width:101px;height:1px;background:#111"></div><span class="t" style="left:132.25px;top:911px;height:22px;line-height:22px;font-size:15px;color:#1f3864;font-weight:700;">Debit</span><span class="t" style="left:303.33px;top:911px;height:22px;line-height:22px;font-size:15px;color:#1f3864;font-weight:700;">Kredit</span><div style="left:27px;top:933px;width:347px;height:1px;background:#1f3864"></div><span class="t" style="left:247.11px;top:933px;height:22px;line-height:22px;font-size:14.67px;color:#000;">-</span><span class="t" style="left:284.42px;top:934px;height:22px;line-height:22px;font-size:14.67px;color:#000;transform:scaleX(0.9683);transform-origin:100% 50%;">573.845.461</span><span class="t" style="left:376.00px;top:935px;height:20px;line-height:20px;font-size:13.3px;color:#000;transform:scaleX(1.0358);transform-origin:0 50%;">Persediaan StokTersedia di Juli di jual di Agustus</span><span class="t" style="left:185.42px;top:956px;height:22px;line-height:22px;font-size:14.67px;color:#000;transform:scaleX(0.9683);transform-origin:100% 50%;">573.845.461</span><span class="t" style="left:376.00px;top:957px;height:20px;line-height:20px;font-size:13.3px;color:#000;transform:scaleX(1.0358);transform-origin:0 50%;">Persediaan StokTersedia di Juli di jual di Agustus</span><svg style="left:26px;top:556px" width="252" height="26"><rect x="1" y="1" width="249" height="22" fill="none" stroke="#fff" stroke-width="2"/><rect x="1" y="1" width="249" height="22" fill="none" stroke="#1e7145" stroke-width="2" stroke-dasharray="5 3"/></svg></div></div>
<div style="left:276px;top:228px;width:97px;height:759px;overflow:hidden;"><div style="left:-276px;top:-228px;width:1920px;height:1080px;"><span class="t" style="left:278.00px;top:404px;height:22px;line-height:22px;font-size:14.67px;color:#000;transform:scaleX(0.8430);transform-origin:0 50%;">PI.2022.07.00024</span><span class="t" style="left:278.00px;top:426px;height:22px;line-height:22px;font-size:14.67px;color:#000;transform:scaleX(0.8430);transform-origin:0 50%;">PI.2022.07.00027</span><span class="t" style="left:278.00px;top:448px;height:22px;line-height:22px;font-size:14.67px;color:#000;transform:scaleX(0.8430);transform-origin:0 50%;">PI.2022.06.00039</span><span class="t" style="left:278.00px;top:470px;height:22px;line-height:22px;font-size:14.67px;color:#000;transform:scaleX(0.8430);transform-origin:0 50%;">PI.2022.07.00008</span><span class="t" style="left:278.00px;top:492px;height:22px;line-height:22px;font-size:14.67px;color:#000;transform:scaleX(0.8430);transform-origin:0 50%;">PI.2022.07.00019</span><span class="t" style="left:278.00px;top:514px;height:22px;line-height:22px;font-size:14.67px;color:#000;transform:scaleX(0.8430);transform-origin:0 50%;">PI.2022.07.00022</span><span class="t" style="left:278.00px;top:536px;height:22px;line-height:22px;font-size:14.67px;color:#000;transform:scaleX(0.8430);transform-origin:0 50%;">PI.2022.07.00025</span><span class="t" style="left:278.00px;top:558px;height:22px;line-height:22px;font-size:14.67px;color:#000;transform:scaleX(0.8430);transform-origin:0 50%;">PI.2022.07.00028</span><span class="t" style="left:278.00px;top:580px;height:22px;line-height:22px;font-size:14.67px;color:#000;transform:scaleX(0.8430);transform-origin:0 50%;">PI.2022.07.00014</span><span class="t" style="left:278.00px;top:602px;height:22px;line-height:22px;font-size:14.67px;color:#000;transform:scaleX(0.8430);transform-origin:0 50%;">PI.2022.07.00018</span><span class="t" style="left:278.00px;top:624px;height:22px;line-height:22px;font-size:14.67px;color:#000;transform:scaleX(0.8430);transform-origin:0 50%;">PI.2022.07.00026</span><span class="t" style="left:278.00px;top:646px;height:22px;line-height:22px;font-size:14.67px;color:#000;transform:scaleX(0.8430);transform-origin:0 50%;">PI.2022.07.00048</span><span class="t" style="left:278.00px;top:668px;height:22px;line-height:22px;font-size:14.67px;color:#000;transform:scaleX(0.8430);transform-origin:0 50%;">PI.2022.07.00065</span><span class="t" style="left:278.00px;top:690px;height:22px;line-height:22px;font-size:14.67px;color:#000;transform:scaleX(0.8430);transform-origin:0 50%;">PI.2022.07.00046</span><span class="t" style="left:278.00px;top:712px;height:22px;line-height:22px;font-size:14.67px;color:#000;transform:scaleX(0.8430);transform-origin:0 50%;">PI.2022.08.00002</span><span class="t" style="left:278.00px;top:734px;height:22px;line-height:22px;font-size:14.67px;color:#000;transform:scaleX(0.8430);transform-origin:0 50%;">PI.2022.07.00069</span><span class="t" style="left:278.00px;top:756px;height:22px;line-height:22px;font-size:14.67px;color:#000;transform:scaleX(0.8430);transform-origin:0 50%;">PI.2022.07.00067</span><span class="t" style="left:278.00px;top:778px;height:22px;line-height:22px;font-size:14.67px;color:#000;transform:scaleX(0.8430);transform-origin:0 50%;">PI.2022.07.00016</span><span class="t" style="left:278.00px;top:800px;height:22px;line-height:22px;font-size:14.67px;color:#000;transform:scaleX(0.8430);transform-origin:0 50%;">PI.2022.07.00023</span><span class="t" style="left:278.00px;top:822px;height:22px;line-height:22px;font-size:14.67px;color:#000;transform:scaleX(0.8430);transform-origin:0 50%;">PI.2022.07.00015</span></div></div>
<div style="left:1px;top:227px;width:938px;height:1px;background:#9b9b9b;"></div>
<span class="t" style="left:147.30px;top:209px;height:20px;line-height:20px;font-size:13.3px;color:#262626;transform:scaleX(0.8461);transform-origin:50% 50%;">L</span>
<span class="t" style="left:318.96px;top:209px;height:20px;line-height:20px;font-size:13.3px;color:#262626;transform:scaleX(1.1488);transform-origin:50% 50%;">M</span>
<span class="t" style="left:406.70px;top:209px;height:20px;line-height:20px;font-size:13.3px;color:#262626;">N</span>
<span class="t" style="left:495.56px;top:209px;height:20px;line-height:20px;font-size:13.3px;color:#262626;transform:scaleX(0.8669);transform-origin:50% 50%;">P</span>
<span class="t" style="left:637.83px;top:209px;height:20px;line-height:20px;font-size:13.3px;color:#262626;transform:scaleX(0.9683);transform-origin:50% 50%;">Q</span>
<span class="t" style="left:751.20px;top:209px;height:20px;line-height:20px;font-size:13.3px;color:#262626;transform:scaleX(0.8416);transform-origin:50% 50%;">R</span>
<span class="t" style="left:790.56px;top:209px;height:20px;line-height:20px;font-size:13.3px;color:#262626;transform:scaleX(0.7710);transform-origin:50% 50%;">S</span>
<span class="t" style="left:879.44px;top:209px;height:20px;line-height:20px;font-size:13.3px;color:#262626;transform:scaleX(0.8929);transform-origin:50% 50%;">T</span>
<div style="left:26px;top:209px;width:1px;height:18px;background:#b4b4b4;"></div>
<div style="left:275px;top:209px;width:1px;height:18px;background:#b4b4b4;"></div>
<div style="left:373px;top:209px;width:1px;height:18px;background:#b4b4b4;"></div>
<div style="left:446px;top:209px;width:1px;height:18px;background:#b4b4b4;"></div>
<div style="left:451px;top:209px;width:1px;height:18px;background:#b4b4b4;"></div>
<div style="left:549px;top:209px;width:1px;height:18px;background:#b4b4b4;"></div>
<div style="left:736px;top:209px;width:1px;height:18px;background:#b4b4b4;"></div>
<div style="left:775px;top:209px;width:1px;height:18px;background:#b4b4b4;"></div>
<div style="left:814px;top:209px;width:1px;height:18px;background:#b4b4b4;"></div>
<svg style="left:10px;top:212px;" width="14" height="13" viewBox="0 0 14 13"><path d="M13 0 V12 H1 Z" fill="#b4b4b4"/></svg>
<div style="left:1px;top:228px;width:26px;height:759px;overflow:hidden;"><div style="left:-1px;top:-228px;width:1920px;height:1080px;"><div style="left:1px;top:248px;width:25px;height:1px;background:#c4c4c4"></div><span class="t" style="left:10.30px;top:230px;height:20px;line-height:20px;font-size:13.3px;color:#262626;transform:scaleX(0.9463);transform-origin:50% 50%;">1</span><div style="left:1px;top:293px;width:25px;height:1px;background:#c4c4c4"></div><span class="t" style="left:10.30px;top:274px;height:20px;line-height:20px;font-size:13.3px;color:#262626;transform:scaleX(0.9463);transform-origin:50% 50%;">2</span><div style="left:1px;top:315px;width:25px;height:1px;background:#c4c4c4"></div><span class="t" style="left:2.90px;top:296px;height:20px;line-height:20px;font-size:13.3px;color:#262626;transform:scaleX(0.9463);transform-origin:50% 50%;">384</span><div style="left:1px;top:337px;width:25px;height:1px;background:#c4c4c4"></div><span class="t" style="left:2.90px;top:318px;height:20px;line-height:20px;font-size:13.3px;color:#262626;transform:scaleX(0.9463);transform-origin:50% 50%;">385</span><div style="left:1px;top:359px;width:25px;height:1px;background:#c4c4c4"></div><span class="t" style="left:2.90px;top:340px;height:20px;line-height:20px;font-size:13.3px;color:#262626;transform:scaleX(0.9463);transform-origin:50% 50%;">386</span><div style="left:1px;top:403px;width:25px;height:1px;background:#c4c4c4"></div><span class="t" style="left:2.90px;top:384px;height:20px;line-height:20px;font-size:13.3px;color:#262626;transform:scaleX(0.9463);transform-origin:50% 50%;">387</span><div style="left:1px;top:425px;width:25px;height:1px;background:#c4c4c4"></div><span class="t" style="left:2.90px;top:406px;height:20px;line-height:20px;font-size:13.3px;color:#262626;transform:scaleX(0.9463);transform-origin:50% 50%;">388</span><div style="left:1px;top:447px;width:25px;height:1px;background:#c4c4c4"></div><span class="t" style="left:2.90px;top:428px;height:20px;line-height:20px;font-size:13.3px;color:#262626;transform:scaleX(0.9463);transform-origin:50% 50%;">389</span><div style="left:1px;top:469px;width:25px;height:1px;background:#c4c4c4"></div><span class="t" style="left:2.90px;top:450px;height:20px;line-height:20px;font-size:13.3px;color:#262626;transform:scaleX(0.9463);transform-origin:50% 50%;">390</span><div style="left:1px;top:491px;width:25px;height:1px;background:#c4c4c4"></div><span class="t" style="left:2.90px;top:472px;height:20px;line-height:20px;font-size:13.3px;color:#262626;transform:scaleX(0.9463);transform-origin:50% 50%;">391</span><div style="left:1px;top:513px;width:25px;height:1px;background:#c4c4c4"></div><span class="t" style="left:2.90px;top:494px;height:20px;line-height:20px;font-size:13.3px;color:#262626;transform:scaleX(0.9463);transform-origin:50% 50%;">392</span><div style="left:1px;top:535px;width:25px;height:1px;background:#c4c4c4"></div><span class="t" style="left:2.90px;top:516px;height:20px;line-height:20px;font-size:13.3px;color:#262626;transform:scaleX(0.9463);transform-origin:50% 50%;">393</span><div style="left:1px;top:557px;width:25px;height:1px;background:#c4c4c4"></div><span class="t" style="left:2.90px;top:538px;height:20px;line-height:20px;font-size:13.3px;color:#262626;transform:scaleX(0.9463);transform-origin:50% 50%;">394</span><div style="left:1px;top:579px;width:25px;height:1px;background:#c4c4c4"></div><span class="t" style="left:2.90px;top:560px;height:20px;line-height:20px;font-size:13.3px;color:#262626;transform:scaleX(0.9463);transform-origin:50% 50%;">395</span><div style="left:1px;top:601px;width:25px;height:1px;background:#c4c4c4"></div><span class="t" style="left:2.90px;top:582px;height:20px;line-height:20px;font-size:13.3px;color:#262626;transform:scaleX(0.9463);transform-origin:50% 50%;">396</span><div style="left:1px;top:623px;width:25px;height:1px;background:#c4c4c4"></div><span class="t" style="left:2.90px;top:604px;height:20px;line-height:20px;font-size:13.3px;color:#262626;transform:scaleX(0.9463);transform-origin:50% 50%;">397</span><div style="left:1px;top:645px;width:25px;height:1px;background:#c4c4c4"></div><span class="t" style="left:2.90px;top:626px;height:20px;line-height:20px;font-size:13.3px;color:#262626;transform:scaleX(0.9463);transform-origin:50% 50%;">398</span><div style="left:1px;top:667px;width:25px;height:1px;background:#c4c4c4"></div><span class="t" style="left:2.90px;top:648px;height:20px;line-height:20px;font-size:13.3px;color:#262626;transform:scaleX(0.9463);transform-origin:50% 50%;">399</span><div style="left:1px;top:689px;width:25px;height:1px;background:#c4c4c4"></div><span class="t" style="left:2.90px;top:670px;height:20px;line-height:20px;font-size:13.3px;color:#262626;transform:scaleX(0.9463);transform-origin:50% 50%;">400</span><div style="left:1px;top:711px;width:25px;height:1px;background:#c4c4c4"></div><span class="t" style="left:2.90px;top:692px;height:20px;line-height:20px;font-size:13.3px;color:#262626;transform:scaleX(0.9463);transform-origin:50% 50%;">401</span><div style="left:1px;top:733px;width:25px;height:1px;background:#c4c4c4"></div><span class="t" style="left:2.90px;top:714px;height:20px;line-height:20px;font-size:13.3px;color:#262626;transform:scaleX(0.9463);transform-origin:50% 50%;">402</span><div style="left:1px;top:755px;width:25px;height:1px;background:#c4c4c4"></div><span class="t" style="left:2.90px;top:736px;height:20px;line-height:20px;font-size:13.3px;color:#262626;transform:scaleX(0.9463);transform-origin:50% 50%;">403</span><div style="left:1px;top:777px;width:25px;height:1px;background:#c4c4c4"></div><span class="t" style="left:2.90px;top:758px;height:20px;line-height:20px;font-size:13.3px;color:#262626;transform:scaleX(0.9463);transform-origin:50% 50%;">404</span><div style="left:1px;top:799px;width:25px;height:1px;background:#c4c4c4"></div><span class="t" style="left:2.90px;top:780px;height:20px;line-height:20px;font-size:13.3px;color:#262626;transform:scaleX(0.9463);transform-origin:50% 50%;">405</span><div style="left:1px;top:821px;width:25px;height:1px;background:#c4c4c4"></div><span class="t" style="left:2.90px;top:802px;height:20px;line-height:20px;font-size:13.3px;color:#262626;transform:scaleX(0.9463);transform-origin:50% 50%;">406</span><div style="left:1px;top:843px;width:25px;height:1px;background:#c4c4c4"></div><span class="t" style="left:2.90px;top:824px;height:20px;line-height:20px;font-size:13.3px;color:#262626;transform:scaleX(0.9463);transform-origin:50% 50%;">407</span><div style="left:1px;top:866px;width:25px;height:1px;background:#c4c4c4"></div><span class="t" style="left:2.90px;top:847px;height:20px;line-height:20px;font-size:13.3px;color:#262626;transform:scaleX(0.9463);transform-origin:50% 50%;">408</span><div style="left:1px;top:889px;width:25px;height:1px;background:#c4c4c4"></div><span class="t" style="left:2.90px;top:870px;height:20px;line-height:20px;font-size:13.3px;color:#262626;transform:scaleX(0.9463);transform-origin:50% 50%;">409</span><div style="left:1px;top:911px;width:25px;height:1px;background:#c4c4c4"></div><span class="t" style="left:2.90px;top:892px;height:20px;line-height:20px;font-size:13.3px;color:#262626;transform:scaleX(0.9463);transform-origin:50% 50%;">410</span><div style="left:1px;top:933px;width:25px;height:1px;background:#c4c4c4"></div><span class="t" style="left:3.40px;top:914px;height:20px;line-height:20px;font-size:13.3px;color:#262626;transform:scaleX(0.9904);transform-origin:50% 50%;">411</span><div style="left:1px;top:955px;width:25px;height:1px;background:#c4c4c4"></div><span class="t" style="left:2.90px;top:936px;height:20px;line-height:20px;font-size:13.3px;color:#262626;transform:scaleX(0.9463);transform-origin:50% 50%;">412</span><div style="left:1px;top:977px;width:25px;height:1px;background:#c4c4c4"></div><span class="t" style="left:2.90px;top:958px;height:20px;line-height:20px;font-size:13.3px;color:#262626;transform:scaleX(0.9463);transform-origin:50% 50%;">413</span><div style="left:1px;top:999px;width:25px;height:1px;background:#c4c4c4"></div><span class="t" style="left:2.90px;top:980px;height:20px;line-height:20px;font-size:13.3px;color:#262626;transform:scaleX(0.9463);transform-origin:50% 50%;">414</span><div style="left:26px;top:228px;width:1px;height:759px;background:#9b9b9b"></div></div></div>
<div style="left:939px;top:205px;width:21px;height:783px;background:#e6e6e6;"></div>
<div style="left:942px;top:228px;width:18px;height:743px;background:#d6d6d6;"></div>
<div style="left:942px;top:210px;width:15px;height:15px;background:#fff;border:1px solid #c6c6c6;box-sizing:border-box;"></div>
<svg style="left:945px;top:215px;" width="9" height="5" viewBox="0 0 9 5"><path d="M0.5 4.5 L4.5 0.5 L8.5 4.5 Z" fill="#777"/></svg>
<div style="left:942px;top:972px;width:15px;height:15px;background:#fff;border:1px solid #c6c6c6;box-sizing:border-box;"></div>
<svg style="left:945px;top:977px;" width="9" height="5" viewBox="0 0 9 5"><path d="M0.5 0.5 L4.5 4.5 L8.5 0.5 Z" fill="#777"/></svg>
<div style="left:942px;top:587px;width:15px;height:29px;background:#fff;border:1px solid #bdbdbd;box-sizing:border-box;"></div>
<div style="left:938px;top:228px;width:1px;height:760px;background:#a0a0a0;"></div>
<div style="left:1px;top:988px;width:959px;height:27px;background:#e6e6e6;"></div>
<div style="left:1px;top:987px;width:101px;height:1px;background:#a6a6a6;"></div>
<div style="left:273px;top:987px;width:666px;height:1px;background:#a6a6a6;"></div>
<div style="left:1px;top:1015px;width:959px;height:1px;background:#d0d0d0;"></div>
<svg style="left:26px;top:995px;" width="6" height="9" viewBox="0 0 6 9"><path d="M5 0.5 L0.8 4.5 L5 8.5 Z" fill="#c6c6c6"/></svg>
<svg style="left:55px;top:995px;" width="6" height="9" viewBox="0 0 6 9"><path d="M1 0.5 L5.2 4.5 L1 8.5 Z" fill="#c6c6c6"/></svg>
<div style="left:101px;top:987px;width:173px;height:24px;background:linear-gradient(#ffffff,#f4faf2 55%,#cfe8cf);border-left:1px solid #a6a6a6;border-right:1px solid #a6a6a6;box-sizing:border-box;"></div>
<div style="left:101px;top:1010px;width:173px;height:2px;background:#217346;"></div>
<span class="t" style="left:115.10px;top:991px;height:20px;line-height:20px;font-size:12.5px;color:#217346;font-weight:700;transform:scaleX(1.0222);transform-origin:50% 50%;">Detail JV Koreksi VS FM</span>
<div style="left:276px;top:990px;width:35px;height:22px;background:#ffff00;"></div>
<span class="t" style="left:284.35px;top:991px;height:20px;line-height:20px;font-size:12.5px;color:#222;transform:scaleX(0.9156);transform-origin:50% 50%;">B2</span>
<div style="left:312px;top:992px;width:1px;height:18px;background:#c6c6c6;"></div>
<div style="left:315px;top:990px;width:108px;height:22px;background:#ffc000;"></div>
<span class="t" style="left:327.40px;top:991px;height:20px;line-height:20px;font-size:12.5px;color:#3a2a00;transform:scaleX(1.0227);transform-origin:50% 50%;">Jurnal Koreksi</span>
<div style="left:424px;top:992px;width:1px;height:18px;background:#c6c6c6;"></div>
<div style="left:426px;top:990px;width:123px;height:22px;background:#ffc000;"></div>
<span class="t" style="left:439.41px;top:991px;height:20px;line-height:20px;font-size:12.5px;color:#3a2a00;transform:scaleX(1.0192);transform-origin:50% 50%;">Detail JV Koreksi</span>
<div style="left:550px;top:992px;width:1px;height:18px;background:#c6c6c6;"></div>
<svg style="left:584px;top:992px;" width="17" height="17" viewBox="0 0 17 17"><circle cx="8.5" cy="8.5" r="7.3" fill="none" stroke="#777" stroke-width="1.1"/><path d="M8.5 4.8 V12.2 M4.8 8.5 H12.2" stroke="#777" stroke-width="1.6"/></svg>
<div style="left:897px;top:995px;width:2px;height:2px;background:#b8b8b8;"></div>
<div style="left:897px;top:1000px;width:2px;height:2px;background:#b8b8b8;"></div>
<div style="left:897px;top:1005px;width:2px;height:2px;background:#b8b8b8;"></div>
<div style="left:913px;top:993px;width:12px;height:15px;background:#fff;border:1px solid #c6c6c6;box-sizing:border-box;"></div>
<div style="left:925px;top:993px;width:12px;height:15px;background:#fff;border:1px solid #c6c6c6;box-sizing:border-box;"></div>
<svg style="left:916px;top:997px;" width="5" height="8" viewBox="0 0 5 8"><path d="M4.5 0.5 L0.8 4 L4.5 7.5 Z" fill="#666"/></svg>
<svg style="left:928px;top:997px;" width="5" height="8" viewBox="0 0 5 8"><path d="M0.5 0.5 L4.2 4 L0.5 7.5 Z" fill="#666"/></svg>
<div style="left:1px;top:1016px;width:959px;height:22px;background:#f3f1f1;"></div>
<span class="t" style="left:8.00px;top:1019px;height:17px;line-height:17px;font-size:11.5px;color:#444;transform:scaleX(0.9708);transform-origin:0 50%;">Select destination and press ENTER or choose Paste</span>
<div style="left:651px;top:1016px;width:37px;height:22px;background:#c8c8c8;"></div>
<svg style="left:662px;top:1020px;" width="13" height="13" viewBox="0 0 13 13"><rect x="0.5" y="0.5" width="12" height="12" fill="none" stroke="#444"/><path d="M0.5 4.5 H12.5 M0.5 8.5 H12.5 M4.5 0.5 V12.5 M8.5 0.5 V12.5" stroke="#444"/></svg>
<svg style="left:702px;top:1020px;" width="13" height="13" viewBox="0 0 13 13"><rect x="0.5" y="0.5" width="12" height="12" fill="none" stroke="#555"/><rect x="3.5" y="3.5" width="6" height="6" fill="none" stroke="#555"/><path d="M5 6.5 H8" stroke="#555"/></svg>
<svg style="left:742px;top:1020px;" width="13" height="13" viewBox="0 0 13 13"><rect x="0.5" y="0.5" width="12" height="12" fill="none" stroke="#555"/><path d="M0.5 6.5 H6.5 V0.5 M3.5 0.5 V6.5" fill="none" stroke="#555"/></svg>
<div style="left:775px;top:1026px;width:8px;height:1px;background:#444;"></div>
<div style="left:789px;top:1026px;width:99px;height:1px;background:#a0a0a0;"></div>
<div style="left:836px;top:1019px;width:5px;height:14px;background:#6a6a6a;"></div>
<div style="left:892px;top:1026px;width:9px;height:1px;background:#444;"></div>
<div style="left:896px;top:1022px;width:1px;height:9px;background:#444;"></div>
<span class="t" style="left:913.00px;top:1018px;height:17px;line-height:17px;font-size:11.5px;color:#555;transform:scaleX(0.9520);transform-origin:0 50%;">100%</span>
<div style="left:0px;top:0px;width:1px;height:1038px;background:#8c938e;"></div>
<div style="left:960px;top:0px;width:1px;height:1038px;background:#6f7f76;"></div>
<div style="left:961px;top:0px;width:1px;height:1038px;background:#dfe6e2;"></div>
<div style="left:962px;top:0px;width:955px;height:1038px;background:#e6e6e6;"></div>
<div style="left:962px;top:0px;width:955px;height:35px;background:#217346;"></div>
<div style="left:962px;top:0px;width:955px;height:1px;background:#1e6b40;"></div>
<svg style="left:984px;top:11px;" width="16" height="16" viewBox="0 0 16 16"><rect x="0.8" y="1" width="14.4" height="14" rx="0.8" fill="#ffffff"/><rect x="3.4" y="2.8" width="9.2" height="4.2" fill="#217346"/><rect x="4.3" y="10.2" width="7.4" height="4.8" fill="#217346"/><rect x="7.6" y="11.2" width="3.2" height="2.8" fill="#ffffff"/></svg>
<svg style="left:1013px;top:11px;" width="18" height="16" viewBox="0 0 18 16"><path d="M2 5.5 H10 A4 4 0 0 1 10 13.5 H8.5" fill="none" stroke="#ffffff" stroke-width="2.1"/><path d="M6.2 1.3 L2 5.5 L6.2 9.7" fill="none" stroke="#ffffff" stroke-width="2.1"/></svg>
<svg style="left:1033px;top:14px;" width="10" height="8" viewBox="0 0 10 8"><path d="M2.0 2.2 L5 4.9 L8.0 2.2" fill="none" stroke="#d5eadd" stroke-width="1.4"/></svg>
<svg style="left:1052px;top:11px;" width="18" height="16" viewBox="0 0 18 16"><path d="M16 5.5 H8 A4 4 0 0 0 8 13.5 H9.5" fill="none" stroke="#4e9470" stroke-width="2.1"/><path d="M11.8 1.3 L16 5.5 L11.8 9.7" fill="none" stroke="#4e9470" stroke-width="2.1"/></svg>
<svg style="left:1072px;top:14px;" width="10" height="8" viewBox="0 0 10 8"><path d="M2.0 2.2 L5 4.9 L8.0 2.2" fill="none" stroke="#3f8662" stroke-width="1.4"/></svg>
<svg style="left:1094px;top:15px;" width="10" height="10" viewBox="0 0 10 10"><path d="M1.5 1.5 H8.5" stroke="#ffffff" stroke-width="1.4"/><path d="M1.8 4.5 H8.2 L5 8 Z" fill="#ffffff"/></svg>
<span class="t" style="left:1401.00px;top:9px;height:18px;line-height:18px;font-size:13px;color:#ffffff;transform:scaleX(0.8807);transform-origin:0 50%;">Book2 &nbsp;- &nbsp;Excel</span>
<div style="left:1665px;top:8px;width:58px;height:19px;background:#ffffff;"></div>
<span class="t" style="left:1674.89px;top:9px;height:19px;line-height:19px;font-size:12.5px;color:#217346;transform:scaleX(0.9680);transform-origin:50% 50%;">Sign in</span>
<svg style="left:1748px;top:11px;" width="14" height="12" viewBox="0 0 14 12"><rect x="0.5" y="0.5" width="13" height="10" fill="none" stroke="#ffffff" stroke-width="1"/><path d="M0.5 3 H13.5" stroke="#ffffff" stroke-width="1"/><path d="M7 9 V4.5 M5 6.3 L7 4.3 L9 6.3" fill="none" stroke="#ffffff" stroke-width="1"/></svg>
<div style="left:1797px;top:16px;width:10px;height:1px;background:#ffffff;"></div>
<div style="left:1843px;top:12px;width:10px;height:10px;border:1px solid #ffffff;box-sizing:border-box;"></div>
<svg style="left:1889px;top:12px;" width="11" height="11" viewBox="0 0 11 11"><path d="M0.5 0.5 L10.5 10.5 M10.5 0.5 L0.5 10.5" stroke="#ffffff" stroke-width="1.1"/></svg>
<div style="left:962px;top:35px;width:955px;height:31px;background:#f3f1f1;"></div>
<div style="left:962px;top:35px;width:955px;height:1px;background:#dff0e6;"></div>
<span class="t" style="left:980.00px;top:42px;height:18px;line-height:18px;font-size:13px;color:#444444;transform:scaleX(0.9070);transform-origin:0 50%;">File</span>
<span class="t" style="left:1031.00px;top:42px;height:18px;line-height:18px;font-size:13px;color:#3a3a3a;transform:scaleX(1.0669);transform-origin:0 50%;">Home</span>
<div style="left:1031px;top:60px;width:38px;height:3px;background:#217346;"></div>
<span class="t" style="left:1096.00px;top:42px;height:18px;line-height:18px;font-size:13px;color:#444444;transform:scaleX(0.9842);transform-origin:0 50%;">Insert</span>
<span class="t" style="left:1159.00px;top:42px;height:18px;line-height:18px;font-size:13px;color:#444444;transform:scaleX(0.9725);transform-origin:0 50%;">Page Layout</span>
<span class="t" style="left:1260.00px;top:42px;height:18px;line-height:18px;font-size:13px;color:#444444;transform:scaleX(0.9782);transform-origin:0 50%;">Formulas</span>
<span class="t" style="left:1342.00px;top:42px;height:18px;line-height:18px;font-size:13px;color:#444444;transform:scaleX(0.9832);transform-origin:0 50%;">Data</span>
<span class="t" style="left:1398.00px;top:42px;height:18px;line-height:18px;font-size:13px;color:#444444;transform:scaleX(0.9384);transform-origin:0 50%;">Review</span>
<span class="t" style="left:1466.00px;top:42px;height:18px;line-height:18px;font-size:13px;color:#444444;transform:scaleX(0.9662);transform-origin:0 50%;">View</span>
<span class="t" style="left:1521.00px;top:42px;height:18px;line-height:18px;font-size:13px;color:#444444;transform:scaleX(0.9724);transform-origin:0 50%;">Help</span>
<svg style="left:1587px;top:41px;" width="14" height="19" viewBox="0 0 14 19"><path d="M7 1.2 A5 5 0 0 1 10 10.2 V12.6 H4 V10.2 A5 5 0 0 1 7 1.2 Z" fill="none" stroke="#555" stroke-width="1.1"/><path d="M4.6 14.6 H9.4 M5.4 16.6 H8.6" stroke="#555" stroke-width="1.1"/></svg>
<span class="t" style="left:1616.00px;top:42px;height:18px;line-height:18px;font-size:13px;color:#444444;transform:scaleX(1.0223);transform-origin:0 50%;">Tell me what you want to do</span>
<div style="left:1837.5px;top:39px;width:68px;height:23px;background:#ffffff;border:1px solid #eceaea;box-sizing:border-box;"></div>
<svg style="left:1844.5px;top:43px;" width="14" height="14" viewBox="0 0 14 14"><path d="M4.5 4.5 H1 V12.5 H10.5 V9" fill="none" stroke="#555" stroke-width="1"/><path d="M4 9.5 C4 6 6.5 4.2 9 4.2 H12 M9.5 1.5 L12.3 4.2 L9.5 7" fill="none" stroke="#555" stroke-width="1"/></svg>
<span class="t" style="left:1860.50px;top:42px;height:18px;line-height:18px;font-size:13px;color:#2a6b47;transform:scaleX(1.0089);transform-origin:0 50%;">Share</span>
<div style="left:962px;top:66px;width:955px;height:95px;background:#f3f1f1;"></div>
<div style="left:962px;top:161px;width:955px;height:9px;background:linear-gradient(#dcdbdb,#d0d0d0 30%,#d6d6d6 60%,#e6e6e6);"></div>
<svg style="left:978px;top:72px;" width="32" height="33" viewBox="0 0 32 33"><rect x="1.5" y="4" width="24.5" height="25" rx="1" fill="#f0c676"/><rect x="7" y="2.4" width="14" height="4.8" rx="0.8" fill="#6b6b6b"/><circle cx="14" cy="2.4" r="2.3" fill="#6b6b6b"/><circle cx="14" cy="2.2" r="0.9" fill="#f3f1f1"/><path d="M16.5 12.5 H25 L29.5 17 V30.5 H16.5 Z" fill="#ffffff" stroke="#6b6b6b" stroke-width="1"/><path d="M25 12.5 V17 H29.5" fill="none" stroke="#6b6b6b" stroke-width="1"/></svg>
<span class="t" style="left:978.00px;top:106px;height:16px;line-height:16px;font-size:12px;color:#444444;transform:scaleX(0.9125);transform-origin:0 50%;">Paste</span>
<svg style="left:987px;top:126px;" width="10" height="8" viewBox="0 0 10 8"><path d="M2.0 2.2 L5 4.9 L8.0 2.2" fill="none" stroke="#555" stroke-width="1.2"/></svg>
<svg style="left:1016px;top:71px;" width="16" height="17" viewBox="0 0 16 17"><path d="M4.2 1 L10.6 11 M11.8 1 L5.4 11" stroke="#5d5d5d" stroke-width="1.9" fill="none"/><circle cx="4.6" cy="13" r="2.3" fill="none" stroke="#5f82b8" stroke-width="1.2"/><circle cx="11.4" cy="13" r="2.3" fill="none" stroke="#5f82b8" stroke-width="1.2"/></svg>
<svg style="left:1016px;top:96px;" width="16" height="16" viewBox="0 0 16 16"><path d="M0.5 1.5 H6.5 L9 4 V11.5 H0.5 Z" fill="#fff" stroke="#666" stroke-width="1"/><path d="M5.5 5.5 H11.5 L14.5 8.5 V15.5 H5.5 Z" fill="#fff" stroke="#666" stroke-width="1"/><path d="M7.5 10 H12.5 M7.5 12.5 H12.5" stroke="#7a9cc8" stroke-width="1"/><path d="M2.5 5 H4 M2.5 7.5 H4" stroke="#7a9cc8" stroke-width="1"/></svg>
<svg style="left:1037px;top:100px;" width="10" height="8" viewBox="0 0 10 8"><path d="M2.0 2.2 L5 4.9 L8.0 2.2" fill="none" stroke="#555" stroke-width="1.2"/></svg>
<svg style="left:1016px;top:119px;" width="18" height="17" viewBox="0 0 18 17"><path d="M13.5 1.5 L16.5 4 L14 7 L11 4.5 Z" fill="#6a6a6a"/><path d="M9.5 4 L13.2 7.2 L10.8 10 L7.2 6.8 Z" fill="#6a6a6a"/><path d="M6.6 7.2 L10.4 10.6 L7.5 14.5 C5.5 14.8 3 13.5 1.5 11 C3.5 10.8 5 9.5 6.6 7.2 Z" fill="#f0c676"/></svg>
<span class="t" style="left:977.00px;top:146px;height:15px;line-height:15px;font-size:11.5px;color:#444444;transform:scaleX(1.0361);transform-origin:0 50%;">Clipboard</span>
<svg style="left:1047px;top:149px;" width="9" height="9" viewBox="0 0 9 9"><path d="M0.5 5 V0.5 H5" fill="none" stroke="#666" stroke-width="1"/><path d="M3 3 L7.5 7.5 M7.5 4 V7.5 H4" fill="none" stroke="#666" stroke-width="1"/></svg>
<div style="left:1058px;top:70px;width:1px;height:88px;background:#d2d0d0;"></div>
<div style="left:1067px;top:78px;width:123px;height:22px;background:#fff;border:1px solid #c8c6c6;box-sizing:border-box;"></div>
<span class="t" style="left:1070.00px;top:81px;height:18px;line-height:18px;font-size:12px;color:#333;">Calibri</span>
<svg style="left:1177px;top:86px;" width="10" height="6" viewBox="0 0 10 6"><path d="M2.5 1 L7.5 1 L5 3.5 Z" fill="#555"/></svg>
<div style="left:1192px;top:78px;width:43px;height:22px;background:#fff;border:1px solid #c8c6c6;box-sizing:border-box;"></div>
<span class="t" style="left:1195.00px;top:81px;height:18px;line-height:18px;font-size:12px;color:#333;transform:scaleX(0.8830);transform-origin:0 50%;">11</span>
<svg style="left:1222px;top:86px;" width="10" height="6" viewBox="0 0 10 6"><path d="M2.5 1 L7.5 1 L5 3.5 Z" fill="#555"/></svg>
<span class="t" style="left:1243.00px;top:80px;height:18px;line-height:18px;font-size:14px;color:#555;transform:scaleX(1.0708);transform-origin:0 50%;">A</span>
<svg style="left:1251px;top:80px;" width="6" height="4" viewBox="0 0 6 4"><path d="M0.5 3.5 L3 0.8 L5.5 3.5 Z" fill="#555"/></svg>
<span class="t" style="left:1268.00px;top:82px;height:16px;line-height:16px;font-size:11.5px;color:#555;transform:scaleX(1.0429);transform-origin:0 50%;">A</span>
<svg style="left:1275px;top:81px;" width="6" height="4" viewBox="0 0 6 4"><path d="M0.5 0.5 L3 3.2 L5.5 0.5 Z" fill="#3d78c8"/></svg>
<span class="t" style="left:1072.31px;top:111px;height:18px;line-height:18px;font-size:13px;color:#444;font-weight:700;">B</span>
<span class="t" style="left:1098.37px;top:111px;height:18px;line-height:18px;font-size:13.5px;color:#444;font-weight:700;font-style:italic;font-family:"Liberation Serif",serif;">I</span>
<span class="t" style="left:1120.31px;top:111px;height:18px;line-height:18px;font-size:13px;color:#444;font-weight:700;transform:scaleX(0.9586);transform-origin:50% 50%;">U</span>
<div style="left:1121px;top:126px;width:9px;height:1px;background:#444;"></div>
<svg style="left:1138px;top:117px;" width="10" height="8" viewBox="0 0 10 8"><path d="M2.5 2.2 L5 4.5 L7.5 2.2" fill="none" stroke="#555" stroke-width="1.1"/></svg>
<div style="left:1156px;top:110px;width:1px;height:22px;background:#d2d0d0;"></div>
<svg style="left:1165px;top:113px;" width="14" height="14" viewBox="0 0 14 14"><rect x="0.5" y="0.5" width="12" height="12" fill="none" stroke="#777" stroke-width="1" stroke-dasharray="1 1"/><path d="M6.5 0 V13 M0 6.5 H13" stroke="#999" stroke-width="1" stroke-dasharray="1 1"/></svg>
<svg style="left:1184px;top:117px;" width="10" height="8" viewBox="0 0 10 8"><path d="M2.5 2.2 L5 4.5 L7.5 2.2" fill="none" stroke="#555" stroke-width="1.1"/></svg>
<div style="left:1202px;top:110px;width:1px;height:22px;background:#d2d0d0;"></div>
<svg style="left:1210px;top:111px;" width="17" height="13" viewBox="0 0 17 13"><path d="M5 5 L9.5 1 L14 6.5 L8.5 11.5 Z" fill="#fff" stroke="#555" stroke-width="1.1"/><path d="M5.5 3.5 C5.5 0.5 8.5 0.5 8.5 3" fill="none" stroke="#555" stroke-width="1"/><path d="M14.8 7.5 C16.2 9.5 16.2 11 14.8 11 C13.4 11 13.4 9.5 14.8 7.5 Z" fill="#3d78c8"/></svg>
<div style="left:1210px;top:125px;width:16px;height:3px;background:#ffeb00;"></div>
<svg style="left:1230px;top:117px;" width="10" height="8" viewBox="0 0 10 8"><path d="M2.5 2.2 L5 4.5 L7.5 2.2" fill="none" stroke="#555" stroke-width="1.1"/></svg>
<span class="t" style="left:1252.50px;top:110px;height:18px;line-height:18px;font-size:13.5px;color:#555;">A</span>
<div style="left:1249px;top:125px;width:16px;height:3px;background:#e8141f;"></div>
<svg style="left:1269px;top:117px;" width="10" height="8" viewBox="0 0 10 8"><path d="M2.5 2.2 L5 4.5 L7.5 2.2" fill="none" stroke="#555" stroke-width="1.1"/></svg>
<span class="t" style="left:1154.00px;top:146px;height:15px;line-height:15px;font-size:11.5px;color:#444444;">Font</span>
<svg style="left:1279px;top:149px;" width="9" height="9" viewBox="0 0 9 9"><path d="M0.5 5 V0.5 H5" fill="none" stroke="#666" stroke-width="1"/><path d="M3 3 L7.5 7.5 M7.5 4 V7.5 H4" fill="none" stroke="#666" stroke-width="1"/></svg>
<div style="left:1290px;top:70px;width:1px;height:88px;background:#d2d0d0;"></div>
<svg style="left:1303px;top:73px;" width="14" height="9" viewBox="0 0 14 9"><rect x="0" y="0" width="14" height="1" fill="#606060"/><rect x="0" y="3" width="14" height="1" fill="#606060"/><rect x="0" y="6" width="14" height="1" fill="#606060"/></svg>
<svg style="left:1327px;top:76px;" width="14" height="9" viewBox="0 0 14 9"><rect x="0" y="0" width="14" height="1" fill="#606060"/><rect x="0" y="3" width="14" height="1" fill="#606060"/><rect x="0" y="6" width="14" height="1" fill="#606060"/></svg>
<div style="left:1347px;top:69px;width:22px;height:22px;background:#c8c6c6;border:1px solid #a8a6a6;box-sizing:border-box;"></div>
<svg style="left:1351px;top:81px;" width="14" height="9" viewBox="0 0 14 9"><rect x="0" y="0" width="14" height="1" fill="#606060"/><rect x="0" y="3" width="14" height="1" fill="#606060"/><rect x="0" y="6" width="14" height="1" fill="#606060"/></svg>
<span class="t" style="left:1376.16px;top:69px;height:12px;line-height:12px;font-size:10.5px;color:#444;transform:scaleX(0.9418);transform-origin:50% 50%;">ab</span>
<span class="t" style="left:1376.38px;top:77px;height:12px;line-height:12px;font-size:10.5px;color:#444;">c</span>
<svg style="left:1383px;top:80px;" width="8" height="8" viewBox="0 0 8 8"><path d="M6.5 0.5 V4.5 H1.5 M3.5 2.5 L1.5 4.5 L3.5 6.5" fill="none" stroke="#3d78c8" stroke-width="1"/></svg>
<svg style="left:1303px;top:99px;" width="14" height="12" viewBox="0 0 14 12"><rect x="0" y="0" width="14" height="1" fill="#606060"/><rect x="0" y="3" width="10" height="1" fill="#606060"/><rect x="0" y="6" width="14" height="1" fill="#606060"/><rect x="0" y="9" width="10" height="1" fill="#606060"/></svg>
<svg style="left:1327px;top:99px;" width="14" height="12" viewBox="0 0 14 12"><rect x="0.0" y="0" width="14" height="1" fill="#606060"/><rect x="2.0" y="3" width="10" height="1" fill="#606060"/><rect x="0.0" y="6" width="14" height="1" fill="#606060"/><rect x="2.0" y="9" width="10" height="1" fill="#606060"/></svg>
<svg style="left:1351px;top:99px;" width="14" height="12" viewBox="0 0 14 12"><rect x="0" y="0" width="14" height="1" fill="#606060"/><rect x="4" y="3" width="10" height="1" fill="#606060"/><rect x="0" y="6" width="14" height="1" fill="#606060"/><rect x="4" y="9" width="10" height="1" fill="#606060"/></svg>
<svg style="left:1375px;top:96px;" width="16" height="15" viewBox="0 0 16 15"><rect x="0.5" y="0.5" width="14" height="13" fill="none" stroke="#666" stroke-width="1"/><path d="M0.5 4.5 H14.5 M0.5 9.5 H14.5 M7.5 0.5 V4.5 M7.5 9.5 V13.5" stroke="#666" stroke-width="1"/><path d="M3 7 H12 M4.5 5.7 L3 7 L4.5 8.3 M10.5 5.7 L12 7 L10.5 8.3" fill="none" stroke="#3d78c8" stroke-width="1"/></svg>
<svg style="left:1396px;top:100px;" width="10" height="8" viewBox="0 0 10 8"><path d="M2.5 2.2 L5 4.5 L7.5 2.2" fill="none" stroke="#555" stroke-width="1.1"/></svg>
<svg style="left:1302px;top:121px;" width="16" height="13" viewBox="0 0 16 13"><path d="M0 0.5 H16 M8 3.5 H16 M8 6.5 H16 M8 9.5 H16 M0 12.5 H16" stroke="#555" stroke-width="1"/><path d="M6.5 6.5 H1 M3.5 4 L1 6.5 L3.5 9" fill="none" stroke="#3d78c8" stroke-width="1.3"/></svg>
<svg style="left:1326px;top:121px;" width="16" height="13" viewBox="0 0 16 13"><path d="M0 0.5 H16 M8 3.5 H16 M8 6.5 H16 M8 9.5 H16 M0 12.5 H16" stroke="#555" stroke-width="1"/><path d="M0.5 6.5 H6 M3.5 4 L6 6.5 L3.5 9" fill="none" stroke="#3d78c8" stroke-width="1.3"/></svg>
<div style="left:1349px;top:118px;width:1px;height:20px;background:#d2d0d0;"></div>
<svg style="left:1356px;top:119px;" width="18" height="17" viewBox="0 0 18 17"><text x="1" y="12" font-size="10" font-family="Liberation Sans" fill="#444" transform="rotate(-40 6 10)">ab</text><path d="M5 15.5 L16 6.5 M12.5 6 L16 6.5 L15.6 10" fill="none" stroke="#555" stroke-width="1"/></svg>
<svg style="left:1376px;top:124px;" width="10" height="8" viewBox="0 0 10 8"><path d="M2.5 2.2 L5 4.5 L7.5 2.2" fill="none" stroke="#555" stroke-width="1.1"/></svg>
<span class="t" style="left:1319.00px;top:146px;height:15px;line-height:15px;font-size:11.5px;color:#444444;transform:scaleX(1.0168);transform-origin:0 50%;">Alignment</span>
<svg style="left:1406px;top:149px;" width="9" height="9" viewBox="0 0 9 9"><path d="M0.5 5 V0.5 H5" fill="none" stroke="#666" stroke-width="1"/><path d="M3 3 L7.5 7.5 M7.5 4 V7.5 H4" fill="none" stroke="#666" stroke-width="1"/></svg>
<div style="left:1417px;top:70px;width:1px;height:88px;background:#d2d0d0;"></div>
<div style="left:1426px;top:70px;width:85px;height:22px;background:#fff;border:1px solid #c8c6c6;box-sizing:border-box;"></div>
<span class="t" style="left:1429.00px;top:72px;height:18px;line-height:18px;font-size:12px;color:#333;transform:scaleX(0.9369);transform-origin:0 50%;">General</span>
<svg style="left:1498px;top:78px;" width="10" height="6" viewBox="0 0 10 6"><path d="M2.5 1 L7.5 1 L5 3.5 Z" fill="#555"/></svg>
<svg style="left:1429px;top:96px;" width="18" height="16" viewBox="0 0 18 16"><rect x="0" y="0.5" width="15" height="8" fill="#3b6db3"/><rect x="1.5" y="2" width="12" height="5" fill="#dbe6f5"/><circle cx="7.5" cy="4.5" r="2.2" fill="#3b6db3"/><ellipse cx="11.5" cy="8" rx="4.5" ry="1.7" fill="#e8c98a"/><ellipse cx="9" cy="10.8" rx="4.8" ry="1.7" fill="#f0d49a"/><ellipse cx="7.5" cy="13.5" rx="4.8" ry="1.7" fill="#f3dcae"/></svg>
<svg style="left:1450px;top:100px;" width="10" height="8" viewBox="0 0 10 8"><path d="M2.5 2.2 L5 4.5 L7.5 2.2" fill="none" stroke="#555" stroke-width="1.1"/></svg>
<span class="t" style="left:1469.78px;top:95px;height:18px;line-height:18px;font-size:14px;color:#444;transform:scaleX(0.8837);transform-origin:50% 50%;">%</span>
<span class="t" style="left:1497.64px;top:91px;height:18px;line-height:18px;font-size:17px;color:#444;font-weight:700;">,</span>
<svg style="left:1428px;top:120px;" width="16" height="15" viewBox="0 0 16 15"><text x="5.5" y="7" font-size="8.5" font-family="Liberation Sans" fill="#444">.0</text><text x="1.5" y="14.5" font-size="8.5" font-family="Liberation Sans" fill="#444">.00</text><path d="M6 3.8 H1.5 M3.3 1.8 L1.3 3.8 L3.3 5.8" fill="none" stroke="#3d6fb0" stroke-width="1.2"/></svg>
<svg style="left:1453px;top:120px;" width="16" height="15" viewBox="0 0 16 15"><text x="3" y="7" font-size="8.5" font-family="Liberation Sans" fill="#444">.00</text><text x="7.5" y="14.5" font-size="8.5" font-family="Liberation Sans" fill="#444">.0</text><path d="M0.5 11 H6 M4 9 L6 11 L4 13" fill="none" stroke="#3d6fb0" stroke-width="1.2"/></svg>
<span class="t" style="left:1439.00px;top:146px;height:15px;line-height:15px;font-size:11.5px;color:#444444;">Number</span>
<svg style="left:1507px;top:149px;" width="9" height="9" viewBox="0 0 9 9"><path d="M0.5 5 V0.5 H5" fill="none" stroke="#666" stroke-width="1"/><path d="M3 3 L7.5 7.5 M7.5 4 V7.5 H4" fill="none" stroke="#666" stroke-width="1"/></svg>
<div style="left:1518px;top:70px;width:1px;height:88px;background:#d2d0d0;"></div>
<svg style="left:1530px;top:71px;" width="17" height="16" viewBox="0 0 17 16"><rect x="0.5" y="0.5" width="13" height="11.5" fill="#fff" stroke="#6a6a6a" stroke-width="1"/><path d="M0.5 4.3 H13.5 M0.5 8.2 H13.5 M4.8 0.5 V12 M9.2 0.5 V12" stroke="#6a6a6a" stroke-width="1"/><rect x="0" y="0" width="9" height="4" fill="#c8474b"/><rect x="0" y="4.6" width="4.6" height="3.4" fill="#4a7ab5"/><rect x="0" y="8.6" width="4.6" height="3.6" fill="#c8474b"/><rect x="6.8" y="7.3" width="9.2" height="8" fill="#fff" stroke="#555" stroke-width="1.1"/><path d="M8.8 10.3 H14 M8.8 12.6 H14 M12.6 9 L10.2 14" stroke="#444" stroke-width="1"/></svg>
<span class="t" style="left:1549.00px;top:72px;height:17px;line-height:17px;font-size:12px;color:#444444;transform:scaleX(1.0271);transform-origin:0 50%;">Conditional Formatting</span>
<svg style="left:1674px;top:76px;" width="10" height="8" viewBox="0 0 10 8"><path d="M2.5 2.2 L5 4.5 L7.5 2.2" fill="none" stroke="#555" stroke-width="1.1"/></svg>
<svg style="left:1530px;top:94px;" width="17" height="17" viewBox="0 0 17 17"><rect x="0.5" y="0.5" width="14.5" height="12" fill="#fff" stroke="#6a6a6a" stroke-width="1"/><rect x="4" y="4" width="11" height="8.5" fill="#c9d0da"/><path d="M0.5 4 H15 M0.5 8 H15 M4 0.5 V12.5 M8 0.5 V12.5 M11.5 0.5 V12.5" stroke="#8a8a8a" stroke-width="0.9"/><path d="M16.2 3 L16.6 6.2 L11 11.2 L9 9.3 Z" fill="#5f6670"/><path d="M9 9.3 L11 11.2 C10.5 14 7.5 15.8 4 15.6 C6 14.5 6.2 11 9 9.3 Z" fill="#3f6ea8"/><path d="M7.5 11.2 L9.6 13" stroke="#dbe6f5" stroke-width="0.9"/></svg>
<svg style="left:1530px;top:117px;" width="17" height="17" viewBox="0 0 17 17"><rect x="0.5" y="0.5" width="14.5" height="12" fill="#fff" stroke="#6a6a6a" stroke-width="1"/><rect x="4" y="4" width="11" height="8.5" fill="#c9d0da"/><path d="M0.5 4 H15 M0.5 8 H15 M4 0.5 V12.5 M8 0.5 V12.5 M11.5 0.5 V12.5" stroke="#8a8a8a" stroke-width="0.9"/><path d="M16.2 3 L16.6 6.2 L11 11.2 L9 9.3 Z" fill="#5f6670"/><path d="M9 9.3 L11 11.2 C10.5 14 7.5 15.8 4 15.6 C6 14.5 6.2 11 9 9.3 Z" fill="#3f6ea8"/><path d="M7.5 11.2 L9.6 13" stroke="#dbe6f5" stroke-width="0.9"/></svg>
<span class="t" style="left:1549.00px;top:95px;height:17px;line-height:17px;font-size:12px;color:#444444;transform:scaleX(0.9438);transform-origin:0 50%;">Format as Table</span>
<svg style="left:1632px;top:99px;" width="10" height="8" viewBox="0 0 10 8"><path d="M2.5 2.2 L5 4.5 L7.5 2.2" fill="none" stroke="#555" stroke-width="1.1"/></svg>
<span class="t" style="left:1549.00px;top:118px;height:17px;line-height:17px;font-size:12px;color:#444444;transform:scaleX(0.9174);transform-origin:0 50%;">Cell Styles</span>
<svg style="left:1603px;top:122px;" width="10" height="8" viewBox="0 0 10 8"><path d="M2.5 2.2 L5 4.5 L7.5 2.2" fill="none" stroke="#555" stroke-width="1.1"/></svg>
<span class="t" style="left:1594.00px;top:146px;height:15px;line-height:15px;font-size:11.5px;color:#444444;transform:scaleX(0.8941);transform-origin:0 50%;">Styles</span>
<div style="left:1698px;top:70px;width:1px;height:88px;background:#d2d0d0;"></div>
<svg style="left:1710px;top:71px;" width="17" height="16" viewBox="0 0 17 16"><rect x="0.5" y="0.5" width="7" height="4" fill="none" stroke="#b8b6b6"/><rect x="0.5" y="10.5" width="7" height="4" fill="none" stroke="#b8b6b6"/><rect x="0.5" y="5.5" width="7" height="4" fill="none" stroke="#b8b6b6"/><rect x="9.5" y="5.5" width="6" height="4" fill="none" stroke="#b8b6b6"/><path d="M9 7.5 H3.5 M5.5 5.8 L3.5 7.5 L5.5 9.2" fill="none" stroke="#c9c9d8" stroke-width="1.2"/></svg>
<span class="t" style="left:1729.00px;top:72px;height:17px;line-height:17px;font-size:12px;color:#b4b2b2;transform:scaleX(0.9663);transform-origin:0 50%;">Insert</span>
<svg style="left:1767px;top:76px;" width="10" height="8" viewBox="0 0 10 8"><path d="M2.5 2.2 L5 4.5 L7.5 2.2" fill="none" stroke="#555" stroke-width="1.1"/></svg>
<svg style="left:1710px;top:94px;" width="17" height="16" viewBox="0 0 17 16"><rect x="0.5" y="0.5" width="7" height="4" fill="none" stroke="#666"/><rect x="0.5" y="10.5" width="7" height="4" fill="none" stroke="#666"/><rect x="0.5" y="5.5" width="7" height="4" fill="none" stroke="#666"/><path d="M10 4 L15.5 9.5 M15.5 4 L10 9.5" stroke="#e03a3a" stroke-width="1.3"/></svg>
<span class="t" style="left:1729.00px;top:95px;height:17px;line-height:17px;font-size:12px;color:#444444;transform:scaleX(0.9513);transform-origin:0 50%;">Delete</span>
<svg style="left:1771px;top:99px;" width="10" height="8" viewBox="0 0 10 8"><path d="M2.5 2.2 L5 4.5 L7.5 2.2" fill="none" stroke="#555" stroke-width="1.1"/></svg>
<svg style="left:1710px;top:116px;" width="17" height="17" viewBox="0 0 17 17"><path d="M1 1.5 H14 M1 0 V3 M14 0 V3" stroke="#3d78c8" stroke-width="1"/><rect x="0.5" y="5.5" width="14" height="10" fill="#fff" stroke="#666"/><path d="M0.5 8.5 H14.5 M0.5 12 H14.5 M5 5.5 V15.5 M10 5.5 V15.5" stroke="#666"/><rect x="5.5" y="9" width="4" height="3" fill="#3d78c8"/></svg>
<span class="t" style="left:1729.00px;top:118px;height:17px;line-height:17px;font-size:12px;color:#444444;">Format</span>
<svg style="left:1768px;top:122px;" width="10" height="8" viewBox="0 0 10 8"><path d="M2.5 2.2 L5 4.5 L7.5 2.2" fill="none" stroke="#555" stroke-width="1.1"/></svg>
<span class="t" style="left:1733.00px;top:146px;height:15px;line-height:15px;font-size:11.5px;color:#444444;transform:scaleX(0.8998);transform-origin:0 50%;">Cells</span>
<div style="left:1792px;top:70px;width:1px;height:88px;background:#d2d0d0;"></div>
<svg style="left:1803px;top:71px;" width="16" height="16" viewBox="0 0 16 16"><path d="M14 3.5 V1 H1.5 L8 8 L1.5 15 H14 V12.5" fill="none" stroke="#444" stroke-width="1.7"/></svg>
<svg style="left:1824px;top:76px;" width="10" height="8" viewBox="0 0 10 8"><path d="M2.5 2.2 L5 4.5 L7.5 2.2" fill="none" stroke="#555" stroke-width="1.1"/></svg>
<svg style="left:1842px;top:70px;" width="18" height="18" viewBox="0 0 18 18"><text x="0" y="7.5" font-size="8.5" font-family="Liberation Sans" fill="#3d78c8">A</text><text x="0.5" y="17" font-size="8.5" font-family="Liberation Sans" fill="#7a3c9a">Z</text><path d="M7 5 H15.5 L12.3 9 V13 L10.2 11.5 V9 Z" fill="#555"/></svg>
<svg style="left:1861px;top:76px;" width="10" height="8" viewBox="0 0 10 8"><path d="M2.5 2.2 L5 4.5 L7.5 2.2" fill="none" stroke="#555" stroke-width="1.1"/></svg>
<svg style="left:1804px;top:94px;" width="16" height="16" viewBox="0 0 16 16"><rect x="0.5" y="0.5" width="13" height="14" fill="#fff" stroke="#666"/><rect x="0.5" y="0.5" width="13" height="3.5" fill="#777"/><path d="M7 5.5 V12 M4 9.2 L7 12.2 L10 9.2" fill="none" stroke="#3d78c8" stroke-width="1.6"/></svg>
<svg style="left:1823px;top:99px;" width="10" height="8" viewBox="0 0 10 8"><path d="M2.5 2.2 L5 4.5 L7.5 2.2" fill="none" stroke="#555" stroke-width="1.1"/></svg>
<svg style="left:1842px;top:95px;" width="15" height="15" viewBox="0 0 15 15"><circle cx="9" cy="5.5" r="4.3" fill="none" stroke="#3d78c8" stroke-width="1.6"/><path d="M6 8.8 L1 14" stroke="#3d78c8" stroke-width="2"/></svg>
<svg style="left:1861px;top:99px;" width="10" height="8" viewBox="0 0 10 8"><path d="M2.5 2.2 L5 4.5 L7.5 2.2" fill="none" stroke="#555" stroke-width="1.1"/></svg>
<svg style="left:1804px;top:118px;" width="15" height="14" viewBox="0 0 15 14"><path d="M8.5 1 L14 5.5 L7.5 12.5 L2 8 Z" fill="#ee6f8a"/><path d="M2 8 L7.5 12.5 L5.8 13.5 L1.2 10 Z" fill="#f6b9c6"/></svg>
<svg style="left:1823px;top:122px;" width="10" height="8" viewBox="0 0 10 8"><path d="M2.5 2.2 L5 4.5 L7.5 2.2" fill="none" stroke="#555" stroke-width="1.1"/></svg>
<span class="t" style="left:1819.00px;top:146px;height:15px;line-height:15px;font-size:11.5px;color:#444444;transform:scaleX(1.0238);transform-origin:0 50%;">Editing</span>
<div style="left:1882px;top:70px;width:1px;height:88px;background:#d2d0d0;"></div>
<svg style="left:1898px;top:151px;" width="11" height="7" viewBox="0 0 11 7"><path d="M1 6 L5.5 1.5 L10 6" fill="none" stroke="#444" stroke-width="1.3"/></svg>
<div style="left:962px;top:169px;width:955px;height:39px;background:#e6e6e6;"></div>
<div style="left:969px;top:172px;width:101px;height:26px;background:#fff;border:1px solid #c9c9c9;box-sizing:border-box;"></div>
<span class="t" style="left:975.00px;top:177px;height:18px;line-height:18px;font-size:12.5px;color:#444;transform:scaleX(0.9800);transform-origin:0 50%;">A1061</span>
<svg style="left:1054px;top:181px;" width="10" height="6" viewBox="0 0 10 6"><path d="M2.0 1 L8.0 1 L5 4.0 Z" fill="#666"/></svg>
<div style="left:1084px;top:179px;width:2px;height:2px;background:#b8b8b8;"></div>
<div style="left:1084px;top:184px;width:2px;height:2px;background:#b8b8b8;"></div>
<div style="left:1084px;top:189px;width:2px;height:2px;background:#b8b8b8;"></div>
<div style="left:1100px;top:172px;width:110px;height:26px;background:#fff;border:1px solid #c9c9c9;box-sizing:border-box;"></div>
<svg style="left:1113px;top:180px;" width="11" height="11" viewBox="0 0 11 11"><path d="M1 1 L10 10 M10 1 L1 10" stroke="#b9b9b9" stroke-width="1.3"/></svg>
<svg style="left:1148px;top:180px;" width="14" height="11" viewBox="0 0 14 11"><path d="M1 6 L4.5 9.5 L12.5 1.5" fill="none" stroke="#b9b9b9" stroke-width="1.5"/></svg>
<span class="t" style="left:1185.00px;top:175px;height:18px;line-height:18px;font-size:14.5px;color:#555;font-weight:700;font-style:italic;font-family:"Liberation Serif",serif;">f</span>
<span class="t" style="left:1190.50px;top:179px;height:14px;line-height:14px;font-size:10px;color:#555;font-weight:700;font-style:italic;font-family:"Liberation Serif",serif;">x</span>
<div style="left:1213px;top:172px;width:700px;height:26px;background:#fff;border:1px solid #c9c9c9;box-sizing:border-box;"></div>
<span class="t" style="left:1225.00px;top:177px;height:18px;line-height:18px;font-size:12.5px;color:#444;transform:scaleX(1.0069);transform-origin:0 50%;">7</span>
<svg style="left:1899px;top:181px;" width="10" height="8" viewBox="0 0 10 8"><path d="M2.0 2.2 L5 4.9 L8.0 2.2" fill="none" stroke="#555" stroke-width="1.4"/></svg>
<div style="left:963px;top:205px;width:954px;height:784px;background:#e6e6e6;"></div>
<div style="left:996px;top:228px;width:899px;height:761px;background:#fff;"></div>
<div style="left:996px;top:228px;width:899px;height:761px;overflow:hidden;"><div style="left:-996px;top:-228px;width:1920px;height:1080px;"><div style="left:1056px;top:228px;width:1px;height:761px;background:#d4d4d4"></div><div style="left:1117px;top:228px;width:1px;height:761px;background:#d4d4d4"></div><div style="left:1269px;top:228px;width:1px;height:761px;background:#d4d4d4"></div><div style="left:1364px;top:228px;width:1px;height:761px;background:#d4d4d4"></div><div style="left:1483px;top:228px;width:1px;height:761px;background:#d4d4d4"></div><div style="left:1565px;top:228px;width:1px;height:761px;background:#d4d4d4"></div><div style="left:1668px;top:228px;width:1px;height:761px;background:#d4d4d4"></div><div style="left:1764px;top:228px;width:1px;height:761px;background:#d4d4d4"></div><div style="left:1860px;top:228px;width:1px;height:761px;background:#d4d4d4"></div><div style="left:996px;top:247px;width:899px;height:1px;background:#d4d4d4"></div><div style="left:996px;top:267px;width:899px;height:1px;background:#d4d4d4"></div><div style="left:996px;top:287px;width:899px;height:1px;background:#d4d4d4"></div><div style="left:996px;top:307px;width:899px;height:1px;background:#d4d4d4"></div><div style="left:996px;top:327px;width:899px;height:1px;background:#d4d4d4"></div><div style="left:996px;top:347px;width:899px;height:1px;background:#d4d4d4"></div><div style="left:996px;top:367px;width:899px;height:1px;background:#d4d4d4"></div><div style="left:996px;top:387px;width:899px;height:1px;background:#d4d4d4"></div><div style="left:996px;top:407px;width:899px;height:1px;background:#d4d4d4"></div><div style="left:996px;top:427px;width:899px;height:1px;background:#d4d4d4"></div><div style="left:996px;top:447px;width:899px;height:1px;background:#d4d4d4"></div><div style="left:996px;top:467px;width:899px;height:1px;background:#d4d4d4"></div><div style="left:996px;top:487px;width:899px;height:1px;background:#d4d4d4"></div><div style="left:996px;top:507px;width:899px;height:1px;background:#d4d4d4"></div><div style="left:996px;top:527px;width:899px;height:1px;background:#d4d4d4"></div><div style="left:996px;top:547px;width:899px;height:1px;background:#d4d4d4"></div><div style="left:996px;top:567px;width:899px;height:1px;background:#d4d4d4"></div><div style="left:996px;top:587px;width:899px;height:1px;background:#d4d4d4"></div><div style="left:996px;top:607px;width:899px;height:1px;background:#d4d4d4"></div><div style="left:996px;top:627px;width:899px;height:1px;background:#d4d4d4"></div><div style="left:996px;top:647px;width:899px;height:1px;background:#d4d4d4"></div><div style="left:996px;top:667px;width:899px;height:1px;background:#d4d4d4"></div><div style="left:996px;top:687px;width:899px;height:1px;background:#d4d4d4"></div><div style="left:996px;top:707px;width:899px;height:1px;background:#d4d4d4"></div><div style="left:996px;top:727px;width:899px;height:1px;background:#d4d4d4"></div><div style="left:996px;top:747px;width:899px;height:1px;background:#d4d4d4"></div><div style="left:996px;top:767px;width:899px;height:1px;background:#d4d4d4"></div><div style="left:996px;top:787px;width:899px;height:1px;background:#d4d4d4"></div><div style="left:996px;top:807px;width:899px;height:1px;background:#d4d4d4"></div><div style="left:996px;top:827px;width:899px;height:1px;background:#d4d4d4"></div><div style="left:996px;top:847px;width:899px;height:1px;background:#d4d4d4"></div><div style="left:996px;top:867px;width:899px;height:1px;background:#d4d4d4"></div><div style="left:996px;top:887px;width:899px;height:1px;background:#d4d4d4"></div><div style="left:996px;top:907px;width:899px;height:1px;background:#d4d4d4"></div><div style="left:996px;top:927px;width:899px;height:1px;background:#d4d4d4"></div><div style="left:996px;top:947px;width:899px;height:1px;background:#d4d4d4"></div><div style="left:996px;top:967px;width:899px;height:1px;background:#d4d4d4"></div><div style="left:996px;top:987px;width:899px;height:1px;background:#d4d4d4"></div><div style="left:996px;top:268px;width:899px;height:220px;background:#0cab50"></div><div style="left:996px;top:368px;width:899px;height:20px;background:#fff"></div><div style="left:1056px;top:368px;width:1px;height:20px;background:#d4d4d4"></div><div style="left:1117px;top:368px;width:1px;height:20px;background:#d4d4d4"></div><div style="left:1269px;top:368px;width:1px;height:20px;background:#d4d4d4"></div><div style="left:1364px;top:368px;width:1px;height:20px;background:#d4d4d4"></div><div style="left:1483px;top:368px;width:1px;height:20px;background:#d4d4d4"></div><div style="left:1565px;top:368px;width:1px;height:20px;background:#d4d4d4"></div><div style="left:1668px;top:368px;width:1px;height:20px;background:#d4d4d4"></div><div style="left:1764px;top:368px;width:1px;height:20px;background:#d4d4d4"></div><div style="left:1860px;top:368px;width:1px;height:20px;background:#d4d4d4"></div><div style="left:996px;top:427px;width:769px;height:1px;background:#d5ecd9"></div><span class="t" style="left:998.00px;top:249px;height:20px;line-height:20px;font-size:13.3px;color:#000;transform:scaleX(1.0375);transform-origin:0 50%;">Masa</span><span class="t" style="left:1059.00px;top:249px;height:20px;line-height:20px;font-size:13.3px;color:#000;transform:scaleX(1.0264);transform-origin:0 50%;">Kode</span><span class="t" style="left:1120.00px;top:249px;height:20px;line-height:20px;font-size:13.3px;color:#000;transform:scaleX(0.9529);transform-origin:0 50%;">NAMA_PENJUAL</span><span class="t" style="left:1272.00px;top:249px;height:20px;line-height:20px;font-size:13.3px;color:#000;transform:scaleX(0.9583);transform-origin:0 50%;">NPWP</span><span class="t" style="left:1367.00px;top:249px;height:20px;line-height:20px;font-size:13.3px;color:#000;transform:scaleX(0.9834);transform-origin:0 50%;">NOMOR</span><span class="t" style="left:1486.00px;top:249px;height:20px;line-height:20px;font-size:13.3px;color:#000;transform:scaleX(0.9450);transform-origin:0 50%;">TANGGAL</span><span class="t" style="left:1573.00px;top:249px;height:20px;line-height:20px;font-size:13.3px;color:#000;transform:scaleX(0.8973);transform-origin:0 50%;">DPP</span><span class="t" style="left:1676.00px;top:249px;height:20px;line-height:20px;font-size:13.3px;color:#000;transform:scaleX(0.9138);transform-origin:0 50%;">PPN</span><span class="t" style="left:1868.00px;top:249px;height:20px;line-height:20px;font-size:13.3px;color:#000;transform:scaleX(0.9845);transform-origin:0 50%;">PPnBM</span><div style="left:1039px;top:250px;width:17px;height:16px;background:#fff;border:1px solid #b0b0b0;box-sizing:border-box"></div><svg style="left:1043px;top:256px" width="9" height="6"><path d="M0.5 0.5 H8.5 L4.5 4.8 Z" fill="#5a5a5a"/></svg><div style="left:1100px;top:250px;width:17px;height:16px;background:#fff;border:1px solid #b0b0b0;box-sizing:border-box"></div><svg style="left:1104px;top:256px" width="9" height="6"><path d="M0.5 0.5 H8.5 L4.5 4.8 Z" fill="#5a5a5a"/></svg><div style="left:1252px;top:250px;width:17px;height:16px;background:#fff;border:1px solid #b0b0b0;box-sizing:border-box"></div><svg style="left:1254px;top:253px" width="13" height="11"><path d="M4.5 0.5 H12.5 L9.5 4.5 V9.5 L7.5 8 V4.5 Z" fill="#555"/><path d="M0.5 6.5 H4.5 L2.5 9 Z" fill="#555"/></svg><div style="left:1347px;top:250px;width:17px;height:16px;background:#fff;border:1px solid #b0b0b0;box-sizing:border-box"></div><svg style="left:1351px;top:256px" width="9" height="6"><path d="M0.5 0.5 H8.5 L4.5 4.8 Z" fill="#5a5a5a"/></svg><div style="left:1466px;top:250px;width:17px;height:16px;background:#fff;border:1px solid #b0b0b0;box-sizing:border-box"></div><svg style="left:1470px;top:256px" width="9" height="6"><path d="M0.5 0.5 H8.5 L4.5 4.8 Z" fill="#5a5a5a"/></svg><div style="left:1549px;top:250px;width:17px;height:16px;background:#fff;border:1px solid #b0b0b0;box-sizing:border-box"></div><svg style="left:1553px;top:256px" width="9" height="6"><path d="M0.5 0.5 H8.5 L4.5 4.8 Z" fill="#5a5a5a"/></svg><div style="left:1651px;top:250px;width:17px;height:16px;background:#fff;border:1px solid #b0b0b0;box-sizing:border-box"></div><svg style="left:1655px;top:256px" width="9" height="6"><path d="M0.5 0.5 H8.5 L4.5 4.8 Z" fill="#5a5a5a"/></svg><div style="left:1747px;top:250px;width:17px;height:16px;background:#fff;border:1px solid #b0b0b0;box-sizing:border-box"></div><svg style="left:1751px;top:256px" width="9" height="6"><path d="M0.5 0.5 H8.5 L4.5 4.8 Z" fill="#5a5a5a"/></svg><div style="left:1843px;top:250px;width:17px;height:16px;background:#fff;border:1px solid #b0b0b0;box-sizing:border-box"></div><svg style="left:1847px;top:256px" width="9" height="6"><path d="M0.5 0.5 H8.5 L4.5 4.8 Z" fill="#5a5a5a"/></svg><span class="t" style="left:1046.60px;top:269px;height:20px;line-height:20px;font-size:13.3px;color:#07280f;transform:scaleX(0.9463);transform-origin:100% 50%;">1</span><span class="t" style="left:1059.00px;top:269px;height:20px;line-height:20px;font-size:13.3px;color:#07280f;transform:scaleX(0.9463);transform-origin:0 50%;">10</span><span class="t" style="left:1282.49px;top:269px;height:20px;line-height:20px;font-size:13.3px;color:#07280f;transform:scaleX(0.9341);transform-origin:100% 50%;">1,73716E+13</span><span class="t" style="left:1370.04px;top:269px;height:20px;line-height:20px;font-size:13.3px;color:#07280f;transform:scaleX(0.9463);transform-origin:100% 50%;">100012219074247</span><span class="t" style="left:1496.43px;top:269px;height:20px;line-height:20px;font-size:13.3px;color:#07280f;transform:scaleX(1.0215);transform-origin:100% 50%;">19/01/2022</span><span class="t" style="left:1601.83px;top:269px;height:20px;line-height:20px;font-size:13.3px;color:#07280f;transform:scaleX(0.9633);transform-origin:100% 50%;">9.452.348</span><span class="t" style="left:1708.92px;top:269px;height:20px;line-height:20px;font-size:13.3px;color:#07280f;transform:scaleX(0.9568);transform-origin:100% 50%;">945.235</span><span class="t" style="left:1786.43px;top:269px;height:20px;line-height:20px;font-size:13.3px;color:#07280f;transform:scaleX(0.9614);transform-origin:100% 50%;">10.397.583</span><span class="t" style="left:1046.60px;top:289px;height:20px;line-height:20px;font-size:13.3px;color:#07280f;transform:scaleX(0.9463);transform-origin:100% 50%;">1</span><span class="t" style="left:1059.00px;top:289px;height:20px;line-height:20px;font-size:13.3px;color:#07280f;transform:scaleX(0.9463);transform-origin:0 50%;">10</span><span class="t" style="left:1282.49px;top:289px;height:20px;line-height:20px;font-size:13.3px;color:#07280f;transform:scaleX(0.9341);transform-origin:100% 50%;">1,73716E+13</span><span class="t" style="left:1370.04px;top:289px;height:20px;line-height:20px;font-size:13.3px;color:#07280f;transform:scaleX(0.9463);transform-origin:100% 50%;">100012219074583</span><span class="t" style="left:1496.43px;top:289px;height:20px;line-height:20px;font-size:13.3px;color:#07280f;transform:scaleX(1.0215);transform-origin:100% 50%;">21/01/2022</span><span class="t" style="left:1602.82px;top:289px;height:20px;line-height:20px;font-size:13.3px;color:#07280f;transform:scaleX(0.9797);transform-origin:100% 50%;">9.995.110</span><span class="t" style="left:1709.91px;top:289px;height:20px;line-height:20px;font-size:13.3px;color:#07280f;transform:scaleX(0.9768);transform-origin:100% 50%;">999.511</span><span class="t" style="left:1786.43px;top:289px;height:20px;line-height:20px;font-size:13.3px;color:#07280f;transform:scaleX(0.9614);transform-origin:100% 50%;">10.994.621</span><span class="t" style="left:1046.60px;top:309px;height:20px;line-height:20px;font-size:13.3px;color:#07280f;transform:scaleX(0.9463);transform-origin:100% 50%;">3</span><span class="t" style="left:1059.00px;top:309px;height:20px;line-height:20px;font-size:13.3px;color:#07280f;transform:scaleX(0.9463);transform-origin:0 50%;">10</span><span class="t" style="left:1282.49px;top:309px;height:20px;line-height:20px;font-size:13.3px;color:#07280f;transform:scaleX(0.9341);transform-origin:100% 50%;">1,73716E+13</span><span class="t" style="left:1370.04px;top:309px;height:20px;line-height:20px;font-size:13.3px;color:#07280f;transform:scaleX(0.9463);transform-origin:100% 50%;">100012219083510</span><span class="t" style="left:1496.43px;top:309px;height:20px;line-height:20px;font-size:13.3px;color:#07280f;transform:scaleX(1.0215);transform-origin:100% 50%;">16/03/2022</span><span class="t" style="left:1601.83px;top:309px;height:20px;line-height:20px;font-size:13.3px;color:#07280f;transform:scaleX(0.9633);transform-origin:100% 50%;">9.640.081</span><span class="t" style="left:1708.92px;top:309px;height:20px;line-height:20px;font-size:13.3px;color:#07280f;transform:scaleX(0.9568);transform-origin:100% 50%;">964.008</span><span class="t" style="left:1786.43px;top:309px;height:20px;line-height:20px;font-size:13.3px;color:#07280f;transform:scaleX(0.9614);transform-origin:100% 50%;">10.604.089</span><span class="t" style="left:1046.60px;top:329px;height:20px;line-height:20px;font-size:13.3px;color:#07280f;transform:scaleX(0.9463);transform-origin:100% 50%;">4</span><span class="t" style="left:1059.00px;top:329px;height:20px;line-height:20px;font-size:13.3px;color:#07280f;transform:scaleX(0.9463);transform-origin:0 50%;">10</span><span class="t" style="left:1282.49px;top:329px;height:20px;line-height:20px;font-size:13.3px;color:#07280f;transform:scaleX(0.9341);transform-origin:100% 50%;">1,73716E+13</span><span class="t" style="left:1401.49px;top:329px;height:20px;line-height:20px;font-size:13.3px;color:#07280f;transform:scaleX(0.9341);transform-origin:100% 50%;">1,00012E+14</span><span class="t" style="left:1496.43px;top:329px;height:20px;line-height:20px;font-size:13.3px;color:#07280f;transform:scaleX(1.0215);transform-origin:100% 50%;">19/04/2022</span><span class="t" style="left:1601.83px;top:329px;height:20px;line-height:20px;font-size:13.3px;color:#07280f;transform:scaleX(0.9633);transform-origin:100% 50%;">4.543.571</span><span class="t" style="left:1708.92px;top:329px;height:20px;line-height:20px;font-size:13.3px;color:#07280f;transform:scaleX(0.9568);transform-origin:100% 50%;">499.793</span><span class="t" style="left:1793.83px;top:329px;height:20px;line-height:20px;font-size:13.3px;color:#07280f;transform:scaleX(0.9633);transform-origin:100% 50%;">5.043.364</span><span class="t" style="left:1046.60px;top:349px;height:20px;line-height:20px;font-size:13.3px;color:#07280f;transform:scaleX(0.9463);transform-origin:100% 50%;">4</span><span class="t" style="left:1059.00px;top:349px;height:20px;line-height:20px;font-size:13.3px;color:#07280f;transform:scaleX(0.9463);transform-origin:0 50%;">10</span><span class="t" style="left:1282.49px;top:349px;height:20px;line-height:20px;font-size:13.3px;color:#07280f;transform:scaleX(0.9341);transform-origin:100% 50%;">1,73716E+13</span><span class="t" style="left:1401.49px;top:349px;height:20px;line-height:20px;font-size:13.3px;color:#07280f;transform:scaleX(0.9341);transform-origin:100% 50%;">1,00012E+14</span><span class="t" style="left:1496.43px;top:349px;height:20px;line-height:20px;font-size:13.3px;color:#07280f;transform:scaleX(1.0215);transform-origin:100% 50%;">14/04/2022</span><span class="t" style="left:1601.83px;top:349px;height:20px;line-height:20px;font-size:13.3px;color:#07280f;transform:scaleX(0.9633);transform-origin:100% 50%;">3.948.677</span><span class="t" style="left:1708.92px;top:349px;height:20px;line-height:20px;font-size:13.3px;color:#07280f;transform:scaleX(0.9568);transform-origin:100% 50%;">434.354</span><span class="t" style="left:1793.83px;top:349px;height:20px;line-height:20px;font-size:13.3px;color:#07280f;transform:scaleX(0.9633);transform-origin:100% 50%;">4.383.031</span><span class="t" style="left:1046.60px;top:369px;height:20px;line-height:20px;font-size:13.3px;color:#000;transform:scaleX(0.9463);transform-origin:100% 50%;">7</span><span class="t" style="left:1059.00px;top:369px;height:20px;line-height:20px;font-size:13.3px;color:#000;transform:scaleX(0.9463);transform-origin:0 50%;">10</span><span class="t" style="left:1282.49px;top:369px;height:20px;line-height:20px;font-size:13.3px;color:#000;transform:scaleX(0.9341);transform-origin:100% 50%;">1,73716E+13</span><span class="t" style="left:1370.04px;top:369px;height:20px;line-height:20px;font-size:13.3px;color:#000;transform:scaleX(0.9463);transform-origin:100% 50%;">100042263845281</span><span class="t" style="left:1496.43px;top:369px;height:20px;line-height:20px;font-size:13.3px;color:#000;transform:scaleX(1.0215);transform-origin:100% 50%;">20/07/2022</span><span class="t" style="left:1594.43px;top:369px;height:20px;line-height:20px;font-size:13.3px;color:#000;transform:scaleX(0.9614);transform-origin:100% 50%;">10.850.827</span><span class="t" style="left:1697.83px;top:369px;height:20px;line-height:20px;font-size:13.3px;color:#000;transform:scaleX(0.9633);transform-origin:100% 50%;">1.193.591</span><span class="t" style="left:1786.43px;top:369px;height:20px;line-height:20px;font-size:13.3px;color:#000;transform:scaleX(0.9614);transform-origin:100% 50%;">12.044.418</span><span class="t" style="left:1046.60px;top:389px;height:20px;line-height:20px;font-size:13.3px;color:#07280f;transform:scaleX(0.9463);transform-origin:100% 50%;">7</span><span class="t" style="left:1059.00px;top:389px;height:20px;line-height:20px;font-size:13.3px;color:#07280f;transform:scaleX(0.9463);transform-origin:0 50%;">10</span><span class="t" style="left:1282.49px;top:389px;height:20px;line-height:20px;font-size:13.3px;color:#07280f;transform:scaleX(0.9341);transform-origin:100% 50%;">1,73716E+13</span><span class="t" style="left:1370.04px;top:389px;height:20px;line-height:20px;font-size:13.3px;color:#07280f;transform:scaleX(0.9463);transform-origin:100% 50%;">100042263845536</span><span class="t" style="left:1496.43px;top:389px;height:20px;line-height:20px;font-size:13.3px;color:#07280f;transform:scaleX(1.0215);transform-origin:100% 50%;">25/07/2022</span><span class="t" style="left:1601.83px;top:389px;height:20px;line-height:20px;font-size:13.3px;color:#07280f;transform:scaleX(0.9633);transform-origin:100% 50%;">7.697.476</span><span class="t" style="left:1708.92px;top:389px;height:20px;line-height:20px;font-size:13.3px;color:#07280f;transform:scaleX(0.9568);transform-origin:100% 50%;">846.722</span><span class="t" style="left:1793.83px;top:389px;height:20px;line-height:20px;font-size:13.3px;color:#07280f;transform:scaleX(0.9633);transform-origin:100% 50%;">8.544.198</span><span class="t" style="left:1046.60px;top:409px;height:20px;line-height:20px;font-size:13.3px;color:#07280f;transform:scaleX(0.9463);transform-origin:100% 50%;">7</span><span class="t" style="left:1059.00px;top:409px;height:20px;line-height:20px;font-size:13.3px;color:#07280f;transform:scaleX(0.9463);transform-origin:0 50%;">10</span><span class="t" style="left:1282.49px;top:409px;height:20px;line-height:20px;font-size:13.3px;color:#07280f;transform:scaleX(0.9341);transform-origin:100% 50%;">1,73716E+13</span><span class="t" style="left:1370.04px;top:409px;height:20px;line-height:20px;font-size:13.3px;color:#07280f;transform:scaleX(0.9463);transform-origin:100% 50%;">100042263845796</span><span class="t" style="left:1496.43px;top:409px;height:20px;line-height:20px;font-size:13.3px;color:#07280f;transform:scaleX(1.0215);transform-origin:100% 50%;">28/07/2022</span><span class="t" style="left:1594.43px;top:409px;height:20px;line-height:20px;font-size:13.3px;color:#07280f;transform:scaleX(0.9614);transform-origin:100% 50%;">20.234.846</span><span class="t" style="left:1697.83px;top:409px;height:20px;line-height:20px;font-size:13.3px;color:#07280f;transform:scaleX(0.9633);transform-origin:100% 50%;">2.225.833</span><span class="t" style="left:1786.43px;top:409px;height:20px;line-height:20px;font-size:13.3px;color:#07280f;transform:scaleX(0.9614);transform-origin:100% 50%;">22.460.679</span><span class="t" style="left:1040.19px;top:429px;height:20px;line-height:20px;font-size:13.3px;color:#07280f;transform:scaleX(1.0140);transform-origin:100% 50%;">11</span><span class="t" style="left:1059.00px;top:429px;height:20px;line-height:20px;font-size:13.3px;color:#07280f;transform:scaleX(0.9463);transform-origin:0 50%;">10</span><span class="t" style="left:1282.49px;top:429px;height:20px;line-height:20px;font-size:13.3px;color:#07280f;transform:scaleX(0.9341);transform-origin:100% 50%;">1,73716E+13</span><span class="t" style="left:1370.04px;top:429px;height:20px;line-height:20px;font-size:13.3px;color:#07280f;transform:scaleX(0.9463);transform-origin:100% 50%;">100082208782967</span><span class="t" style="left:1497.42px;top:429px;height:20px;line-height:20px;font-size:13.3px;color:#07280f;transform:scaleX(1.0369);transform-origin:100% 50%;">25/11/2022</span><span class="t" style="left:1594.43px;top:429px;height:20px;line-height:20px;font-size:13.3px;color:#07280f;transform:scaleX(0.9614);transform-origin:100% 50%;">14.321.645</span><span class="t" style="left:1697.83px;top:429px;height:20px;line-height:20px;font-size:13.3px;color:#07280f;transform:scaleX(0.9633);transform-origin:100% 50%;">1.575.381</span><span class="t" style="left:1786.43px;top:429px;height:20px;line-height:20px;font-size:13.3px;color:#07280f;transform:scaleX(0.9614);transform-origin:100% 50%;">15.897.026</span><span class="t" style="left:1039.21px;top:449px;height:20px;line-height:20px;font-size:13.3px;color:#07280f;transform:scaleX(0.9463);transform-origin:100% 50%;">12</span><span class="t" style="left:1059.00px;top:449px;height:20px;line-height:20px;font-size:13.3px;color:#07280f;transform:scaleX(1.0140);transform-origin:0 50%;">11</span><span class="t" style="left:1275.00px;top:449px;height:20px;line-height:20px;font-size:13.3px;color:#07280f;transform:scaleX(0.9463);transform-origin:0 50%;">############</span><span class="t" style="left:1371.03px;top:449px;height:20px;line-height:20px;font-size:13.3px;color:#07280f;transform:scaleX(0.9548);transform-origin:100% 50%;">110092258358638</span><span class="t" style="left:1496.43px;top:449px;height:20px;line-height:20px;font-size:13.3px;color:#07280f;transform:scaleX(1.0215);transform-origin:100% 50%;">27/12/2022</span><span class="t" style="left:1603.80px;top:449px;height:20px;line-height:20px;font-size:13.3px;color:#07280f;">4.268.111</span><span class="t" style="left:1708.92px;top:449px;height:20px;line-height:20px;font-size:13.3px;color:#07280f;transform:scaleX(0.9568);transform-origin:100% 50%;">469.492</span><span class="t" style="left:1793.83px;top:449px;height:20px;line-height:20px;font-size:13.3px;color:#07280f;transform:scaleX(0.9633);transform-origin:100% 50%;">4.737.603</span><span class="t" style="left:1039.21px;top:469px;height:20px;line-height:20px;font-size:13.3px;color:#07280f;transform:scaleX(0.9463);transform-origin:100% 50%;">12</span><span class="t" style="left:1059.00px;top:469px;height:20px;line-height:20px;font-size:13.3px;color:#07280f;transform:scaleX(0.9463);transform-origin:0 50%;">10</span><span class="t" style="left:1275.00px;top:469px;height:20px;line-height:20px;font-size:13.3px;color:#07280f;transform:scaleX(0.9463);transform-origin:0 50%;">############</span><span class="t" style="left:1370.04px;top:469px;height:20px;line-height:20px;font-size:13.3px;color:#07280f;transform:scaleX(0.9463);transform-origin:100% 50%;">100092258358225</span><span class="t" style="left:1496.43px;top:469px;height:20px;line-height:20px;font-size:13.3px;color:#07280f;transform:scaleX(1.0215);transform-origin:100% 50%;">08/12/2022</span><span class="t" style="left:1594.43px;top:469px;height:20px;line-height:20px;font-size:13.3px;color:#07280f;transform:scaleX(0.9614);transform-origin:100% 50%;">19.366.447</span><span class="t" style="left:1697.83px;top:469px;height:20px;line-height:20px;font-size:13.3px;color:#07280f;transform:scaleX(0.9633);transform-origin:100% 50%;">2.130.309</span><span class="t" style="left:1786.43px;top:469px;height:20px;line-height:20px;font-size:13.3px;color:#07280f;transform:scaleX(0.9614);transform-origin:100% 50%;">21.496.756</span></div></div>
<div style="left:1118px;top:228px;width:151px;height:761px;overflow:hidden;"><div style="left:-1118px;top:-228px;width:1920px;height:1080px;"><span class="t" style="left:1120.00px;top:269px;height:20px;line-height:20px;font-size:13.3px;color:#07280f;transform:scaleX(0.9257);transform-origin:0 50%;">PT UNIGEMILANG SENTOSA</span><span class="t" style="left:1120.00px;top:289px;height:20px;line-height:20px;font-size:13.3px;color:#07280f;transform:scaleX(0.9257);transform-origin:0 50%;">PT UNIGEMILANG SENTOSA</span><span class="t" style="left:1120.00px;top:309px;height:20px;line-height:20px;font-size:13.3px;color:#07280f;transform:scaleX(0.9257);transform-origin:0 50%;">PT UNIGEMILANG SENTOSA</span><span class="t" style="left:1120.00px;top:329px;height:20px;line-height:20px;font-size:13.3px;color:#07280f;transform:scaleX(0.9257);transform-origin:0 50%;">PT UNIGEMILANG SENTOSA</span><span class="t" style="left:1120.00px;top:349px;height:20px;line-height:20px;font-size:13.3px;color:#07280f;transform:scaleX(0.9257);transform-origin:0 50%;">PT UNIGEMILANG SENTOSA</span><span class="t" style="left:1120.00px;top:369px;height:20px;line-height:20px;font-size:13.3px;color:#000;transform:scaleX(0.9257);transform-origin:0 50%;">PT UNIGEMILANG SENTOSA</span><span class="t" style="left:1120.00px;top:389px;height:20px;line-height:20px;font-size:13.3px;color:#07280f;transform:scaleX(0.9257);transform-origin:0 50%;">PT UNIGEMILANG SENTOSA</span><span class="t" style="left:1120.00px;top:409px;height:20px;line-height:20px;font-size:13.3px;color:#07280f;transform:scaleX(0.9257);transform-origin:0 50%;">PT UNIGEMILANG SENTOSA</span><span class="t" style="left:1120.00px;top:429px;height:20px;line-height:20px;font-size:13.3px;color:#07280f;transform:scaleX(0.9257);transform-origin:0 50%;">PT UNIGEMILANG SENTOSA</span><span class="t" style="left:1120.00px;top:449px;height:20px;line-height:20px;font-size:13.3px;color:#07280f;transform:scaleX(0.9257);transform-origin:0 50%;">PT UNIGEMILANG SENTOSA</span><span class="t" style="left:1120.00px;top:469px;height:20px;line-height:20px;font-size:13.3px;color:#07280f;transform:scaleX(0.9257);transform-origin:0 50%;">PT UNIGEMILANG SENTOSA</span></div></div>
<div style="left:996px;top:208px;width:769px;height:18px;background:#d2d2d2;"></div>
<div style="left:963px;top:227px;width:932px;height:1px;background:#9b9b9b;"></div>
<div style="left:996px;top:226px;width:769px;height:2px;background:#217346;"></div>
<span class="t" style="left:1021.56px;top:208px;height:20px;line-height:20px;font-size:13.3px;color:#3c3c3c;transform:scaleX(0.9710);transform-origin:50% 50%;">A</span>
<span class="t" style="left:1082.56px;top:208px;height:20px;line-height:20px;font-size:13.3px;color:#3c3c3c;transform:scaleX(0.9128);transform-origin:50% 50%;">B</span>
<span class="t" style="left:1188.70px;top:208px;height:20px;line-height:20px;font-size:13.3px;color:#3c3c3c;transform:scaleX(0.8264);transform-origin:50% 50%;">C</span>
<span class="t" style="left:1312.20px;top:208px;height:20px;line-height:20px;font-size:13.3px;color:#3c3c3c;transform:scaleX(0.9536);transform-origin:50% 50%;">D</span>
<span class="t" style="left:1419.56px;top:208px;height:20px;line-height:20px;font-size:13.3px;color:#3c3c3c;transform:scaleX(0.8194);transform-origin:50% 50%;">E</span>
<span class="t" style="left:1520.44px;top:208px;height:20px;line-height:20px;font-size:13.3px;color:#3c3c3c;transform:scaleX(0.8419);transform-origin:50% 50%;">F</span>
<span class="t" style="left:1611.83px;top:208px;height:20px;line-height:20px;font-size:13.3px;color:#3c3c3c;transform:scaleX(0.9078);transform-origin:50% 50%;">G</span>
<span class="t" style="left:1711.70px;top:208px;height:20px;line-height:20px;font-size:13.3px;color:#3c3c3c;transform:scaleX(0.9657);transform-origin:50% 50%;">H</span>
<span class="t" style="left:1810.65px;top:208px;height:20px;line-height:20px;font-size:13.3px;color:#3c3c3c;transform:scaleX(1.0151);transform-origin:50% 50%;">I</span>
<span class="t" style="left:1886.67px;top:208px;height:20px;line-height:20px;font-size:13.3px;color:#3c3c3c;transform:scaleX(0.7138);transform-origin:50% 50%;">J</span>
<div style="left:995px;top:209px;width:1px;height:17px;background:#b4b4b4;"></div>
<div style="left:1056px;top:209px;width:1px;height:17px;background:#b4b4b4;"></div>
<div style="left:1117px;top:209px;width:1px;height:17px;background:#b4b4b4;"></div>
<div style="left:1269px;top:209px;width:1px;height:17px;background:#b4b4b4;"></div>
<div style="left:1364px;top:209px;width:1px;height:17px;background:#b4b4b4;"></div>
<div style="left:1483px;top:209px;width:1px;height:17px;background:#b4b4b4;"></div>
<div style="left:1565px;top:209px;width:1px;height:17px;background:#b4b4b4;"></div>
<div style="left:1668px;top:209px;width:1px;height:17px;background:#b4b4b4;"></div>
<div style="left:1764px;top:209px;width:1px;height:17px;background:#b4b4b4;"></div>
<div style="left:1860px;top:209px;width:1px;height:17px;background:#b4b4b4;"></div>
<svg style="left:978px;top:212px;" width="15" height="13" viewBox="0 0 15 13"><path d="M14 0 V12 H1 Z" fill="#b4b4b4"/></svg>
<div style="left:963px;top:228px;width:33px;height:761px;overflow:hidden;"><div style="left:-963px;top:-228px;width:1920px;height:1080px;"><div style="left:963px;top:247px;width:32px;height:1px;background:#c4c4c4"></div><span class="t" style="left:975.30px;top:229px;height:20px;line-height:20px;font-size:13.3px;color:#262626;transform:scaleX(0.9463);transform-origin:50% 50%;">1</span><div style="left:963px;top:265px;width:32px;height:1px;background:#bdbdbd"></div><div style="left:963px;top:269px;width:32px;height:1px;background:#bdbdbd"></div><span class="t" style="left:975.30px;top:249px;height:20px;line-height:20px;font-size:13.3px;color:#262626;transform:scaleX(0.9463);transform-origin:50% 50%;">2</span><div style="left:963px;top:287px;width:32px;height:1px;background:#c4c4c4"></div><span class="t" style="left:971.60px;top:269px;height:20px;line-height:20px;font-size:13.3px;color:#2a2fc4;transform:scaleX(0.9463);transform-origin:50% 50%;">47</span><div style="left:963px;top:305px;width:32px;height:1px;background:#bdbdbd"></div><div style="left:963px;top:309px;width:32px;height:1px;background:#bdbdbd"></div><span class="t" style="left:971.60px;top:289px;height:20px;line-height:20px;font-size:13.3px;color:#2a2fc4;transform:scaleX(0.9463);transform-origin:50% 50%;">48</span><div style="left:963px;top:325px;width:32px;height:1px;background:#bdbdbd"></div><div style="left:963px;top:329px;width:32px;height:1px;background:#bdbdbd"></div><span class="t" style="left:967.90px;top:309px;height:20px;line-height:20px;font-size:13.3px;color:#2a2fc4;transform:scaleX(0.9463);transform-origin:50% 50%;">476</span><div style="left:963px;top:345px;width:32px;height:1px;background:#bdbdbd"></div><div style="left:963px;top:349px;width:32px;height:1px;background:#bdbdbd"></div><span class="t" style="left:967.90px;top:329px;height:20px;line-height:20px;font-size:13.3px;color:#2a2fc4;transform:scaleX(0.9463);transform-origin:50% 50%;">652</span><div style="left:963px;top:365px;width:32px;height:1px;background:#bdbdbd"></div><div style="left:963px;top:369px;width:32px;height:1px;background:#bdbdbd"></div><span class="t" style="left:967.90px;top:349px;height:20px;line-height:20px;font-size:13.3px;color:#2a2fc4;transform:scaleX(0.9463);transform-origin:50% 50%;">726</span><div style="left:963px;top:385px;width:32px;height:1px;background:#bdbdbd"></div><div style="left:963px;top:389px;width:32px;height:1px;background:#bdbdbd"></div><span class="t" style="left:967.90px;top:369px;height:20px;line-height:20px;font-size:13.3px;color:#2a2fc4;transform:scaleX(0.9463);transform-origin:50% 50%;">922</span><div style="left:963px;top:405px;width:32px;height:1px;background:#bdbdbd"></div><div style="left:963px;top:409px;width:32px;height:1px;background:#bdbdbd"></div><span class="t" style="left:967.90px;top:389px;height:20px;line-height:20px;font-size:13.3px;color:#2a2fc4;transform:scaleX(0.9463);transform-origin:50% 50%;">973</span><div style="left:963px;top:425px;width:32px;height:1px;background:#bdbdbd"></div><div style="left:963px;top:429px;width:32px;height:1px;background:#bdbdbd"></div><span class="t" style="left:967.90px;top:409px;height:20px;line-height:20px;font-size:13.3px;color:#2a2fc4;transform:scaleX(0.9463);transform-origin:50% 50%;">998</span><div style="left:963px;top:445px;width:32px;height:1px;background:#bdbdbd"></div><div style="left:963px;top:449px;width:32px;height:1px;background:#bdbdbd"></div><span class="t" style="left:964.21px;top:429px;height:20px;line-height:20px;font-size:13.3px;color:#2a2fc4;transform:scaleX(0.9463);transform-origin:50% 50%;">1424</span><div style="left:963px;top:465px;width:32px;height:1px;background:#bdbdbd"></div><div style="left:963px;top:469px;width:32px;height:1px;background:#bdbdbd"></div><span class="t" style="left:964.21px;top:449px;height:20px;line-height:20px;font-size:13.3px;color:#2a2fc4;transform:scaleX(0.9463);transform-origin:50% 50%;">1580</span><div style="left:963px;top:485px;width:32px;height:1px;background:#bdbdbd"></div><div style="left:963px;top:489px;width:32px;height:1px;background:#bdbdbd"></div><span class="t" style="left:964.21px;top:469px;height:20px;line-height:20px;font-size:13.3px;color:#2a2fc4;transform:scaleX(0.9463);transform-origin:50% 50%;">1600</span><div style="left:963px;top:507px;width:32px;height:1px;background:#c4c4c4"></div><span class="t" style="left:964.21px;top:489px;height:20px;line-height:20px;font-size:13.3px;color:#262626;transform:scaleX(0.9463);transform-origin:50% 50%;">1703</span><div style="left:963px;top:527px;width:32px;height:1px;background:#c4c4c4"></div><span class="t" style="left:964.21px;top:509px;height:20px;line-height:20px;font-size:13.3px;color:#262626;transform:scaleX(0.9463);transform-origin:50% 50%;">1704</span><div style="left:963px;top:547px;width:32px;height:1px;background:#c4c4c4"></div><span class="t" style="left:964.21px;top:529px;height:20px;line-height:20px;font-size:13.3px;color:#262626;transform:scaleX(0.9463);transform-origin:50% 50%;">1705</span><div style="left:963px;top:567px;width:32px;height:1px;background:#c4c4c4"></div><span class="t" style="left:964.21px;top:549px;height:20px;line-height:20px;font-size:13.3px;color:#262626;transform:scaleX(0.9463);transform-origin:50% 50%;">1706</span><div style="left:963px;top:587px;width:32px;height:1px;background:#c4c4c4"></div><span class="t" style="left:964.21px;top:569px;height:20px;line-height:20px;font-size:13.3px;color:#262626;transform:scaleX(0.9463);transform-origin:50% 50%;">1707</span><div style="left:963px;top:607px;width:32px;height:1px;background:#c4c4c4"></div><span class="t" style="left:964.21px;top:589px;height:20px;line-height:20px;font-size:13.3px;color:#262626;transform:scaleX(0.9463);transform-origin:50% 50%;">1708</span><div style="left:963px;top:627px;width:32px;height:1px;background:#c4c4c4"></div><span class="t" style="left:964.21px;top:609px;height:20px;line-height:20px;font-size:13.3px;color:#262626;transform:scaleX(0.9463);transform-origin:50% 50%;">1709</span><div style="left:963px;top:647px;width:32px;height:1px;background:#c4c4c4"></div><span class="t" style="left:964.21px;top:629px;height:20px;line-height:20px;font-size:13.3px;color:#262626;transform:scaleX(0.9463);transform-origin:50% 50%;">1710</span><div style="left:963px;top:667px;width:32px;height:1px;background:#c4c4c4"></div><span class="t" style="left:964.70px;top:649px;height:20px;line-height:20px;font-size:13.3px;color:#262626;transform:scaleX(0.9790);transform-origin:50% 50%;">1711</span><div style="left:963px;top:687px;width:32px;height:1px;background:#c4c4c4"></div><span class="t" style="left:964.21px;top:669px;height:20px;line-height:20px;font-size:13.3px;color:#262626;transform:scaleX(0.9463);transform-origin:50% 50%;">1712</span><div style="left:963px;top:707px;width:32px;height:1px;background:#c4c4c4"></div><span class="t" style="left:964.21px;top:689px;height:20px;line-height:20px;font-size:13.3px;color:#262626;transform:scaleX(0.9463);transform-origin:50% 50%;">1713</span><div style="left:963px;top:727px;width:32px;height:1px;background:#c4c4c4"></div><span class="t" style="left:964.21px;top:709px;height:20px;line-height:20px;font-size:13.3px;color:#262626;transform:scaleX(0.9463);transform-origin:50% 50%;">1714</span><div style="left:963px;top:747px;width:32px;height:1px;background:#c4c4c4"></div><span class="t" style="left:964.21px;top:729px;height:20px;line-height:20px;font-size:13.3px;color:#262626;transform:scaleX(0.9463);transform-origin:50% 50%;">1715</span><div style="left:963px;top:767px;width:32px;height:1px;background:#c4c4c4"></div><span class="t" style="left:964.21px;top:749px;height:20px;line-height:20px;font-size:13.3px;color:#262626;transform:scaleX(0.9463);transform-origin:50% 50%;">1716</span><div style="left:963px;top:787px;width:32px;height:1px;background:#c4c4c4"></div><span class="t" style="left:964.21px;top:769px;height:20px;line-height:20px;font-size:13.3px;color:#262626;transform:scaleX(0.9463);transform-origin:50% 50%;">1717</span><div style="left:963px;top:807px;width:32px;height:1px;background:#c4c4c4"></div><span class="t" style="left:964.21px;top:789px;height:20px;line-height:20px;font-size:13.3px;color:#262626;transform:scaleX(0.9463);transform-origin:50% 50%;">1718</span><div style="left:963px;top:827px;width:32px;height:1px;background:#c4c4c4"></div><span class="t" style="left:964.21px;top:809px;height:20px;line-height:20px;font-size:13.3px;color:#262626;transform:scaleX(0.9463);transform-origin:50% 50%;">1719</span><div style="left:963px;top:847px;width:32px;height:1px;background:#c4c4c4"></div><span class="t" style="left:964.21px;top:829px;height:20px;line-height:20px;font-size:13.3px;color:#262626;transform:scaleX(0.9463);transform-origin:50% 50%;">1720</span><div style="left:963px;top:867px;width:32px;height:1px;background:#c4c4c4"></div><span class="t" style="left:964.21px;top:849px;height:20px;line-height:20px;font-size:13.3px;color:#262626;transform:scaleX(0.9463);transform-origin:50% 50%;">1721</span><div style="left:963px;top:887px;width:32px;height:1px;background:#c4c4c4"></div><span class="t" style="left:964.21px;top:869px;height:20px;line-height:20px;font-size:13.3px;color:#262626;transform:scaleX(0.9463);transform-origin:50% 50%;">1722</span><div style="left:963px;top:907px;width:32px;height:1px;background:#c4c4c4"></div><span class="t" style="left:964.21px;top:889px;height:20px;line-height:20px;font-size:13.3px;color:#262626;transform:scaleX(0.9463);transform-origin:50% 50%;">1723</span><div style="left:963px;top:927px;width:32px;height:1px;background:#c4c4c4"></div><span class="t" style="left:964.21px;top:909px;height:20px;line-height:20px;font-size:13.3px;color:#262626;transform:scaleX(0.9463);transform-origin:50% 50%;">1724</span><div style="left:963px;top:947px;width:32px;height:1px;background:#c4c4c4"></div><span class="t" style="left:964.21px;top:929px;height:20px;line-height:20px;font-size:13.3px;color:#262626;transform:scaleX(0.9463);transform-origin:50% 50%;">1725</span><div style="left:963px;top:967px;width:32px;height:1px;background:#c4c4c4"></div><span class="t" style="left:964.21px;top:949px;height:20px;line-height:20px;font-size:13.3px;color:#262626;transform:scaleX(0.9463);transform-origin:50% 50%;">1726</span><div style="left:963px;top:987px;width:32px;height:1px;background:#c4c4c4"></div><span class="t" style="left:964.21px;top:969px;height:20px;line-height:20px;font-size:13.3px;color:#262626;transform:scaleX(0.9463);transform-origin:50% 50%;">1727</span><div style="left:995px;top:228px;width:1px;height:761px;background:#9b9b9b"></div><div style="left:989px;top:426px;width:7px;height:2px;background:#1c5a38"></div></div></div>
<div style="left:1895px;top:205px;width:22px;height:783px;background:#e6e6e6;"></div>
<div style="left:1895px;top:228px;width:1px;height:760px;background:#a0a0a0;"></div>
<div style="left:1899px;top:228px;width:15px;height:744px;background:#d6d6d6;"></div>
<div style="left:1899px;top:210px;width:15px;height:15px;background:#fff;border:1px solid #c6c6c6;box-sizing:border-box;"></div>
<svg style="left:1902px;top:215px;" width="9" height="5" viewBox="0 0 9 5"><path d="M0.5 4.5 L4.5 0.5 L8.5 4.5 Z" fill="#777"/></svg>
<div style="left:1899px;top:225px;width:15px;height:17px;background:#fff;border:1px solid #c0c0c0;box-sizing:border-box;"></div>
<div style="left:1899px;top:974px;width:15px;height:15px;background:#fff;border:1px solid #c6c6c6;box-sizing:border-box;"></div>
<svg style="left:1902px;top:979px;" width="9" height="5" viewBox="0 0 9 5"><path d="M0.5 0.5 L4.5 4.5 L8.5 0.5 Z" fill="#777"/></svg>
<div style="left:0px;top:1038px;width:1920px;height:42px;background:#23271f;"></div>
<svg style="left:16px;top:1051px;" width="17" height="17" viewBox="0 0 17 17"><path d="M0 2.4 L7 1.4 V8 H0 Z M8 1.25 L17 0 V8 H8 Z M0 9 H7 V15.6 L0 14.6 Z M8 9 H17 V17 L8 15.75 Z" fill="#fff"/></svg>
<svg style="left:63px;top:1051px;" width="19" height="17" viewBox="0 0 19 17"><rect x="1" y="3.5" width="11" height="9" fill="none" stroke="#fff" stroke-width="1.3"/><path d="M1 0.8 H12 M1 15.6 H12" stroke="#fff" stroke-width="1.2"/><path d="M15.5 2 V6 M15.5 9 V15" stroke="#fff" stroke-width="1.3"/><rect x="14.8" y="0.2" width="1.6" height="1.6" fill="#fff"/></svg>
<svg style="left:110px;top:1048px;" width="26" height="22" viewBox="0 0 26 22"><path d="M1 8 L13 0.5 L25 8 V21 H1 Z" fill="#1277c9"/><path d="M1 8.5 L13 16 L25 8.5 V21 H1 Z" fill="#35a7ee"/><path d="M1 8.5 L13 16 L25 8.5" fill="none" stroke="#fff" stroke-width="1.2"/></svg>
<svg style="left:159px;top:1047px;" width="25" height="25" viewBox="0 0 25 25"><path d="M7 7 V5 A5.5 5.5 0 0 1 18 5 V7" fill="none" stroke="#2aa4e8" stroke-width="1.6"/><rect x="1" y="6.5" width="23" height="17.5" rx="2.5" fill="#f2f2f2"/><rect x="7.5" y="10.5" width="4.4" height="4.4" fill="#f25022"/><rect x="13" y="10.5" width="4.4" height="4.4" fill="#7fba00"/><rect x="7.5" y="16" width="4.4" height="4.4" fill="#00a4ef"/><rect x="13" y="16" width="4.4" height="4.4" fill="#ffb900"/></svg>
<svg style="left:210px;top:1048px;" width="24" height="24" viewBox="0 0 24 24"><path d="M1.5 11 C2.5 4.5 7 1 12.5 1 C19 1 23 6 23 12.5 V14.5 H8.5 C9 18 12 19.5 15 19.5 C17.5 19.5 20 18.8 22 17.5 V22 C19.5 23.3 17 23.8 14 23.8 C7.5 23.8 3.2 19.5 3.2 13.5 C3.2 9.5 5.2 6.8 8 5.2 C4.8 6.2 2.5 8.5 1.5 11 Z M8.6 10.3 H17 C16.8 7.6 15.2 6 12.8 6 C10.6 6 9 7.8 8.6 10.3 Z" fill="#1e7fd6"/></svg>
<svg style="left:257px;top:1046px;" width="26" height="26" viewBox="0 0 24 24"><circle cx="12" cy="12" r="11.5" fill="#e94235"/><path d="M12 12 L2.04 6.25 A11.5 11.5 0 0 0 12 23.5 Z" fill="#34a853" transform="rotate(0 12 12)"/><path d="M12 12 L12 23.5 A11.5 11.5 0 0 0 21.96 6.25 Z" fill="#fbbc04"/><path d="M12 12 L2.04 6.25 A11.5 11.5 0 0 1 21.96 6.25 Z" fill="#e94235"/><path d="M12 12 L6.25 21.96 A11.5 11.5 0 0 1 2.04 6.25 Z" fill="#34a853"/><circle cx="12" cy="12" r="5.4" fill="#fff"/><circle cx="12" cy="12" r="4.2" fill="#4285f4"/></svg>
<svg style="left:272px;top:1062px;" width="13" height="13" viewBox="0 0 13 13"><circle cx="6.5" cy="6.5" r="6.3" fill="#8a6a5e"/><text x="6.5" y="9.6" font-size="8.5" text-anchor="middle" fill="#fff" font-family="Liberation Sans">D</text></svg>
<div style="left:250px;top:1078px;width:40px;height:2px;background:#8fb8e0;"></div>
<svg style="left:307px;top:1047px;" width="25" height="25" viewBox="0 0 25 25"><path d="M12.5 1.5 A10.8 10.8 0 0 1 12.5 23.1 C10.5 23.1 8.6 22.6 7 21.6 L1.8 23.2 L3.4 18.2 A10.8 10.8 0 0 1 12.5 1.5 Z" fill="none" stroke="#2fd267" stroke-width="2.2"/><path d="M8.5 7 C7 8 7 10 8.5 12.5 C10 15 12.5 17 15 17.5 C17 17.8 18 16.5 18 15.5 L15.5 14 L14.3 15.2 C12.5 14.5 11 13 10.2 11.3 L11.3 10 L10 7 Z" fill="#2fd267"/></svg>
<svg style="left:355px;top:1046px;" width="26" height="26" viewBox="0 0 26 26"><defs><radialGradient id="ffg" cx="0.6" cy="0.25" r="0.9"><stop offset="0" stop-color="#ffe14a"/><stop offset="0.45" stop-color="#ff8a16"/><stop offset="1" stop-color="#e3203d"/></radialGradient></defs><path d="M13 3 C15 1 16 0.5 16.5 0 C17 3 19 4.5 21.5 7 C24.5 10 25.5 14 24 18 C22.3 22.8 17.5 25.5 13 25.5 C6 25.5 1 20.5 1 14 C1 10 2.5 7 4 5.5 C4 7 4.5 8 5 8.5 C6 6 9 3.5 13 3 Z" fill="url(#ffg)"/><circle cx="13.5" cy="15" r="5.6" fill="#7b3fd0"/><path d="M8 13 C9.5 10.5 13 10 15 11.5 C13 11.5 12 12.5 12 14 C12 16 14 17.5 16.5 17 C15 19.5 11 19.8 9 17.5 C8 16.3 7.6 14.5 8 13 Z" fill="#ff9a2a"/></svg>
<svg style="left:404px;top:1048px;" width="26" height="23" viewBox="0 0 26 23"><path d="M1 2 H9 L11 4.5 H25 V21 H1 Z" fill="#e9b43a"/><path d="M1 7 H25 V21 H1 Z" fill="#f8d96b"/><rect x="7" y="13" width="12" height="8" fill="#3f94de"/><rect x="10.5" y="17" width="5" height="4" fill="#f8d96b"/></svg>
<svg style="left:454px;top:1047px;" width="24" height="25" viewBox="0 0 24 25"><ellipse cx="12" cy="13" rx="11" ry="11.6" fill="#d8131d"/><ellipse cx="12" cy="13" rx="3.6" ry="8" fill="#23271f"/></svg>
<svg style="left:502.5px;top:1046.5px;" width="25.0" height="25.0" viewBox="0 0 24 24"><circle cx="12" cy="12" r="11.5" fill="#e94235"/><path d="M12 12 L2.04 6.25 A11.5 11.5 0 0 0 12 23.5 Z" fill="#34a853" transform="rotate(0 12 12)"/><path d="M12 12 L12 23.5 A11.5 11.5 0 0 0 21.96 6.25 Z" fill="#fbbc04"/><path d="M12 12 L2.04 6.25 A11.5 11.5 0 0 1 21.96 6.25 Z" fill="#e94235"/><path d="M12 12 L6.25 21.96 A11.5 11.5 0 0 1 2.04 6.25 Z" fill="#34a853"/><circle cx="12" cy="12" r="5.4" fill="#fff"/><circle cx="12" cy="12" r="4.2" fill="#4285f4"/></svg>
<svg style="left:518px;top:1063px;" width="12" height="12" viewBox="0 0 12 12"><circle cx="6" cy="6" r="5.8" fill="#d9c58a"/><circle cx="6" cy="6" r="3.3" fill="none" stroke="#fff" stroke-width="1.1"/></svg>
<svg style="left:552px;top:1048px;" width="26" height="25" viewBox="0 0 26 25"><path d="M2 7 L15 1.5 L22 5 L21 12 L8 20 L4 17 Z" fill="#2e323a"/><path d="M10 9.5 L21 6.5 L24 20.5 L13 23.5 Z" fill="#d9dde4"/><path d="M8 11 L18 8.5 L20.5 21.5 L10.5 24 Z" fill="#f4f5f8"/><path d="M10.5 24 L8 11 L5 12.5 L7.5 22.5 Z" fill="#9aa0ab"/></svg>
<svg style="left:602px;top:1049px;" width="24" height="24" viewBox="0 0 24 24"><circle cx="15" cy="7.5" r="3.3" fill="none" stroke="#c5cf26" stroke-width="3.2" stroke-dasharray="1.9 1.1"/><circle cx="15" cy="7.5" r="2.6" fill="none" stroke="#c5cf26" stroke-width="1.6"/><circle cx="8.5" cy="16.5" r="3.3" fill="none" stroke="#c5cf26" stroke-width="3.2" stroke-dasharray="1.9 1.1"/><circle cx="8.5" cy="16.5" r="2.6" fill="none" stroke="#c5cf26" stroke-width="1.6"/><circle cx="5.5" cy="5" r="2.2" fill="none" stroke="#39b5e8" stroke-width="1.5"/><circle cx="19" cy="20" r="2.2" fill="none" stroke="#39b5e8" stroke-width="1.5"/></svg>
<div style="left:638px;top:1038px;width:48px;height:42px;background:#4a4f48;"></div>
<div style="left:638px;top:1078px;width:48px;height:2px;background:#8fb8e0;"></div>
<svg style="left:649px;top:1047px;" width="26" height="24" viewBox="0 0 26 24"><rect x="8" y="1" width="17" height="22" rx="1.5" fill="#21a366"/><rect x="16.5" y="1" width="8.5" height="5.5" fill="#33c481"/><rect x="8" y="6.5" width="8.5" height="5.5" fill="#107c41"/><rect x="16.5" y="6.5" width="8.5" height="5.5" fill="#21a366"/><rect x="8" y="12" width="8.5" height="5.5" fill="#185c37"/><rect x="16.5" y="12" width="8.5" height="5.5" fill="#107c41"/><rect x="8" y="17.5" width="17" height="5.5" fill="#185c37"/><rect x="0.5" y="5.5" width="13" height="13" rx="1.2" fill="#107c41"/><path d="M4 8.5 L10 15.5 M10 8.5 L4 15.5" stroke="#fff" stroke-width="1.9"/></svg>
<div style="left:687px;top:1040px;width:1px;height:38px;background:#3a3f38;"></div>
<svg style="left:1656px;top:1051px;" width="18" height="18" viewBox="0 0 18 18"><circle cx="12" cy="4.5" r="2.7" fill="none" stroke="#fff" stroke-width="1.2"/><circle cx="5.5" cy="9.5" r="2.5" fill="none" stroke="#fff" stroke-width="1.2"/><path d="M1 17 C1.5 13.5 3.5 12.2 5.5 12.2 C7.5 12.2 9.5 13.5 10 17 M9.5 11.5 C10 9.5 11 8.3 12.5 8.3 C14.5 8.3 16 9.8 16.3 12" fill="none" stroke="#fff" stroke-width="1.2"/></svg>
<svg style="left:1694px;top:1055px;" width="14" height="9" viewBox="0 0 14 9"><path d="M1 8 L7 1.5 L13 8" fill="none" stroke="#fff" stroke-width="1.3"/></svg>
<svg style="left:1716px;top:1053.5px;" width="18" height="15" viewBox="0 0 18 15"><rect x="3.5" y="1" width="13" height="9" fill="none" stroke="#fff" stroke-width="1.2"/><path d="M6 13.5 H14 M10 10 V13.5" stroke="#fff" stroke-width="1.2"/><rect x="0.5" y="0.5" width="4" height="6" fill="#23271f" stroke="#fff" stroke-width="1"/></svg>
<svg style="left:1740px;top:1053px;" width="18" height="15" viewBox="0 0 18 15"><path d="M1 5.5 H4 L8 1.5 V13.5 L4 9.5 H1 Z" fill="none" stroke="#fff" stroke-width="1.2"/><path d="M10.5 5 C11.5 6.5 11.5 8.5 10.5 10" fill="none" stroke="#fff" stroke-width="1.1"/><path d="M12.8 3.2 C14.6 6 14.6 9 12.8 11.8" fill="none" stroke="#9a9a9a" stroke-width="1"/><path d="M15 1.5 C17.6 5.5 17.6 9.5 15 13.5" fill="none" stroke="#6a6a6a" stroke-width="1"/></svg>
<span class="t" style="left:1769.00px;top:1052px;height:16px;line-height:16px;font-size:12px;color:#fff;transform:scaleX(0.9678);transform-origin:0 50%;">IND</span>
<span class="t" style="left:1815.98px;top:1043px;height:16px;line-height:16px;font-size:12px;color:#fff;transform:scaleX(0.8991);transform-origin:50% 50%;">15.22</span>
<span class="t" style="left:1801.97px;top:1061px;height:16px;line-height:16px;font-size:12px;color:#fff;transform:scaleX(0.9657);transform-origin:50% 50%;">31/01/2026</span>
<svg style="left:1878px;top:1051px;" width="18" height="18" viewBox="0 0 18 18"><path d="M1.5 1.5 H16.5 V13 H13 V16.5 L9.5 13 H1.5 Z" fill="#fff"/><path d="M4 5 H14 M4 7.5 H14 M4 10 H11" stroke="#23271f" stroke-width="1"/><circle cx="14.5" cy="13.5" r="3" fill="#23271f" stroke="#fff" stroke-width="0.9"/></svg>
<div style="left:1915px;top:1038px;width:1px;height:42px;background:#4a4f48;"></div>
<div style="left:963px;top:989px;width:954px;height:29px;background:#e6e6e6;"></div>
<div style="left:963px;top:989px;width:101px;height:1px;background:#a6a6a6;"></div>
<div style="left:1101px;top:989px;width:796px;height:1px;background:#a6a6a6;"></div>
<div style="left:963px;top:1017px;width:954px;height:1px;background:#d0d0d0;"></div>
<svg style="left:989px;top:998px;" width="6" height="9" viewBox="0 0 6 9"><path d="M5 0.5 L0.8 4.5 L5 8.5 Z" fill="#c6c6c6"/></svg>
<svg style="left:1017px;top:998px;" width="6" height="9" viewBox="0 0 6 9"><path d="M1 0.5 L5.2 4.5 L1 8.5 Z" fill="#c6c6c6"/></svg>
<div style="left:1063px;top:989px;width:39px;height:23px;background:linear-gradient(#ffffff,#fdfde8 50%,#f4f4a0);border-left:1px solid #c0c0c0;border-right:1px solid #c0c0c0;box-sizing:border-box;"></div>
<div style="left:1063px;top:1011px;width:39px;height:2px;background:#217346;"></div>
<span class="t" style="left:1074.51px;top:992px;height:20px;line-height:20px;font-size:12.5px;color:#217346;font-weight:700;transform:scaleX(0.9387);transform-origin:50% 50%;">B2</span>
<svg style="left:1134px;top:994px;" width="17" height="17" viewBox="0 0 17 17"><circle cx="8.5" cy="8.5" r="7.3" fill="none" stroke="#777" stroke-width="1.1"/><path d="M8.5 4.8 V12.2 M4.8 8.5 H12.2" stroke="#777" stroke-width="1.6"/></svg>
<div style="left:1535px;top:998px;width:2px;height:2px;background:#b8b8b8;"></div>
<div style="left:1535px;top:1003px;width:2px;height:2px;background:#b8b8b8;"></div>
<div style="left:1535px;top:1008px;width:2px;height:2px;background:#b8b8b8;"></div>
<div style="left:1553px;top:996px;width:340px;height:15px;background:#d6d6d6;"></div>
<div style="left:1552px;top:996px;width:14px;height:15px;background:#fff;border:1px solid #c6c6c6;box-sizing:border-box;"></div>
<svg style="left:1557px;top:1000px;" width="5" height="8" viewBox="0 0 5 8"><path d="M4.5 0.5 L0.8 4 L4.5 7.5 Z" fill="#555"/></svg>
<div style="left:1567px;top:996px;width:89px;height:15px;background:#fff;border:1px solid #c0c0c0;box-sizing:border-box;"></div>
<div style="left:1878px;top:996px;width:15px;height:15px;background:#fff;border:1px solid #c6c6c6;box-sizing:border-box;"></div>
<svg style="left:1884px;top:1000px;" width="5" height="8" viewBox="0 0 5 8"><path d="M0.5 0.5 L4.2 4 L0.5 7.5 Z" fill="#555"/></svg>
<div style="left:963px;top:1018px;width:954px;height:21px;background:#f3f1f1;"></div>
<span class="t" style="left:970.00px;top:1021px;height:17px;line-height:17px;font-size:11.5px;color:#444;transform:scaleX(0.9708);transform-origin:0 50%;">Select destination and press ENTER or choose Paste</span>
<span class="t" style="left:1495.00px;top:1020px;height:17px;line-height:17px;font-size:11.5px;color:#555;transform:scaleX(0.9891);transform-origin:0 50%;">Count: 0</span>
<span class="t" style="left:1554.00px;top:1020px;height:17px;line-height:17px;font-size:11.5px;color:#555;transform:scaleX(0.9332);transform-origin:0 50%;">Sum: 0</span>
<div style="left:1608px;top:1018px;width:37px;height:21px;background:#c8c8c8;"></div>
<svg style="left:1619px;top:1022px;" width="13" height="13" viewBox="0 0 13 13"><rect x="0.5" y="0.5" width="12" height="12" fill="none" stroke="#444"/><path d="M0.5 4.5 H12.5 M0.5 8.5 H12.5 M4.5 0.5 V12.5 M8.5 0.5 V12.5" stroke="#444"/></svg>
<svg style="left:1659px;top:1022px;" width="13" height="13" viewBox="0 0 13 13"><rect x="0.5" y="0.5" width="12" height="12" fill="none" stroke="#555"/><rect x="3.5" y="3.5" width="6" height="6" fill="none" stroke="#555"/><path d="M5 6.5 H8" stroke="#555"/></svg>
<svg style="left:1699px;top:1022px;" width="13" height="13" viewBox="0 0 13 13"><rect x="0.5" y="0.5" width="12" height="12" fill="none" stroke="#555"/><path d="M0.5 6.5 H6.5 V0.5 M3.5 0.5 V6.5" fill="none" stroke="#555"/></svg>
<div style="left:1731px;top:1028px;width:8px;height:1px;background:#444;"></div>
<div style="left:1745px;top:1028px;width:100px;height:1px;background:#a0a0a0;"></div>
<div style="left:1793px;top:1021px;width:5px;height:14px;background:#6a6a6a;"></div>
<div style="left:1849px;top:1028px;width:9px;height:1px;background:#444;"></div>
<div style="left:1853px;top:1024px;width:1px;height:9px;background:#444;"></div>
<span class="t" style="left:1871.00px;top:1020px;height:17px;line-height:17px;font-size:11.5px;color:#555;transform:scaleX(0.9180);transform-origin:0 50%;">100%</span>
<div style="left:962px;top:0px;width:1px;height:1039px;background:#4b6a59;"></div>
<div style="left:960px;top:0px;width:3px;height:35px;background:#1c643c;"></div>
<div style="left:1917px;top:0px;width:3px;height:1039px;background:linear-gradient(#3d6b52 0px,#3d6b52 35px,#6f877b 36px,#6a8275 330px,#2a4a35 480px,#1d3a26 700px,#1d3a26 100%);"></div>
<div style="left:963px;top:1039px;width:954px;height:1px;background:#1f5c3c;"></div>
</div></body></html>
